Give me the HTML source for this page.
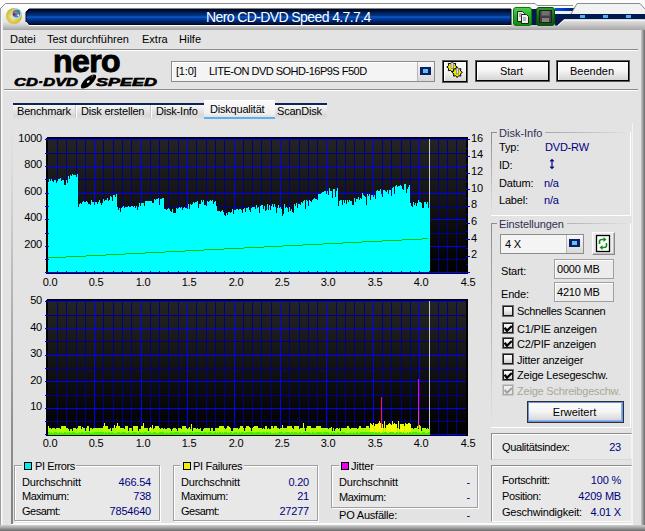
<!DOCTYPE html>
<html><head><meta charset="utf-8">
<style>
*{margin:0;padding:0;box-sizing:border-box}
html,body{width:645px;height:531px;overflow:hidden;background:#e3e3e3}
body{position:relative;font-family:"Liberation Sans",sans-serif;font-size:11px;color:#000}
.t{position:absolute;line-height:13px;white-space:nowrap;letter-spacing:-0.2px}
.m{letter-spacing:0}
.r{text-align:right}
.c{text-align:center}
.nv{color:#00007f}
.abs{position:absolute}
.grp{position:absolute;border:1px solid #a0a0a0;box-shadow:inset 1px 1px 0 #fff,1px 1px 0 #fff}
.fg{position:absolute;border-right:1px solid #fff;border-bottom:1px solid #fff}
.fg:before{content:'';position:absolute;left:0;top:0;right:0;height:1px;background:linear-gradient(90deg,#8c8c8c,#b8b8b8 60%,#e3e3e3)}
.fg:after{content:'';position:absolute;left:0;top:0;bottom:0;width:1px;background:linear-gradient(#8c8c8c,#c0c0c0 60%,#e3e3e3)}
.btn{position:absolute;border:1px solid #5a5a5a;background:linear-gradient(#fcfcfc,#f6f6f6 45%,#dcdcdc 85%,#d0d0d0);box-shadow:inset 0 0 0 1px #000,inset 2px 2px 0 #fff}
.cb{position:absolute;width:12px;height:12px;border:1px solid #707070;background:linear-gradient(#fcfcfc,#f0f0f0 40%,#c4c4c4);box-shadow:inset 0 0 0 1px #1a1a1a}
.tab{position:absolute;top:103px;height:16px;border-top:2px solid #0c2458;background:linear-gradient(#f8f8f8,#e4e4e4 45%,#d8d8d8 75%,#e0e0e0)}
</style></head><body>
<!-- window frame -->
<div class="abs" style="left:0;top:0;width:645px;height:30px;background:linear-gradient(#fdfdfd 0,#fdfdfd 8px,#f0f0f0 14px,#e4e4e4 22px,#c8c8c8 26px,#a4a4a4 30px)"></div>

<div class="abs" style="left:0;top:0;width:645px;height:3px;background:#fdfdfd"></div>
<div class="abs" style="left:0;top:8px;width:3px;height:523px;background:linear-gradient(90deg,#6e6e6e,#fafafa 50%,#e8e8e8)"></div>
<div class="abs" style="left:641px;top:9px;width:4px;height:522px;background:linear-gradient(90deg,#c8c8c8,#6a6a6a)"></div>
<div class="abs" style="left:0;top:525px;width:645px;height:6px;background:linear-gradient(#d0d0d0,#a0a0a0 50%,#686868)"></div>
<!-- title bar -->
<svg class="abs" style="left:0;top:0" width="645" height="30">
 <defs>
  <linearGradient id="tb" x1="0" y1="0" x2="0" y2="1">
   <stop offset="0" stop-color="#000010"/><stop offset="0.1" stop-color="#000c30"/><stop offset="0.25" stop-color="#002260"/><stop offset="0.42" stop-color="#003688"/><stop offset="0.5" stop-color="#0c5cd8"/><stop offset="0.58" stop-color="#0640a0"/><stop offset="0.72" stop-color="#002a78"/><stop offset="0.9" stop-color="#001444"/><stop offset="1" stop-color="#000010"/>
  </linearGradient>
  <radialGradient id="gold" cx="0.45" cy="0.55" r="0.6"><stop offset="0" stop-color="#f8f0c0"/><stop offset="0.45" stop-color="#e0d060"/><stop offset="0.9" stop-color="#c8b820"/><stop offset="1" stop-color="#a89810"/></radialGradient>
 </defs>
 <path d="M0.5 8.5 L5.5 3.5 L535 3.5 L537 5.5 L573 5.5" stroke="#8a8a8a" fill="none"/>
 <path d="M26 12 L29 9 L511 9 L511 25 L29 25 L26 22 Z" fill="url(#tb)" stroke="#000818" stroke-width="1"/>
 <path d="M26 22 L29 25.5 L511 25.5" stroke="#ffffff" fill="none"/>
 <circle cx="14" cy="16" r="8" fill="url(#gold)"/>
 <circle cx="16.5" cy="13.5" r="4.6" fill="#1c8ce0" stroke="#d8d8d8" stroke-width="1.3"/>
 <path d="M14.5 11 L18.5 15" stroke="#f06030" stroke-width="1.6"/>
 <circle cx="14" cy="14.5" r="1.2" fill="#c01010"/><circle cx="18.5" cy="10.8" r="1" fill="#20a040"/><circle cx="18.3" cy="15.5" r="0.9" fill="#fff"/>
 <!-- green buttons -->
 <defs><linearGradient id="gb1" x1="0" y1="0" x2="0" y2="1"><stop offset="0" stop-color="#50d050"/><stop offset="0.5" stop-color="#20b020"/><stop offset="1" stop-color="#108810"/></linearGradient>
 <linearGradient id="gb2" x1="0" y1="0" x2="0" y2="1"><stop offset="0" stop-color="#30a030"/><stop offset="0.5" stop-color="#107010"/><stop offset="1" stop-color="#0a500a"/></linearGradient>
 <linearGradient id="nv" x1="0" y1="0" x2="1" y2="0"><stop offset="0" stop-color="#0850e8"/><stop offset="0.6" stop-color="#0030a0"/><stop offset="1" stop-color="#001050"/></linearGradient></defs>
 <rect x="531" y="9" width="6" height="16" fill="#001a50"/>
 <path d="M555 8 L577 8 L574.5 11 L555 11 Z" fill="url(#nv)"/>
 <path d="M555 11 L645 11 L645 14 L555 14 Z" fill="#f0f0f0"/>
 <path d="M645 14 L645 19.5 L564 19.5 L557.5 25.5 L555 25.5 L555 14 Z" fill="#001a50"/>
 <rect x="513.5" y="7.5" width="18" height="18" rx="2.5" fill="url(#gb1)" stroke="#0a7a0a"/>
 <path d="M517.5 11.5 h5 l2 2 v8 h-7 z" fill="#e8e8e8" stroke="#202020" stroke-width="1"/>
 <path d="M521.5 14.5 h5 l2 2 v7 h-7 z" fill="#f0f0f0" stroke="#202020" stroke-width="1"/>
 <path d="M519 14 h3 M519 16 h3 M523 18 h3 M523 20 h3" stroke="#606060" stroke-width="0.8"/>
 <rect x="536.5" y="7.5" width="18" height="18" rx="2.5" fill="url(#gb2)" stroke="#0a500a"/>
 <rect x="539.5" y="10.5" width="12" height="12" fill="#404040" stroke="#202020"/>
 <rect x="541.5" y="11" width="8" height="4.5" fill="#707070"/>
 <rect x="542" y="18" width="7" height="4" fill="#808080"/>
 <path d="M577 3.5 L640 3.5 L645 9 L645 14 L571 14 Z" fill="#f2f2f2"/>
 <path d="M571 14 L577 3.5 L640 3.5 L645 9" stroke="#8a8a8a" fill="none"/>
 <rect x="580" y="15" width="5" height="3" fill="#50b0f0"/>
 <rect x="603" y="15" width="5" height="3" fill="#50b0f0"/>
 <rect x="626" y="15" width="5" height="3" fill="#50b0f0"/>
 <path d="M564 19.5 L645 19.5 L645 30 L555 30 L555 26 L557.5 26 Z" fill="url(#sl)"/><defs><linearGradient id="sl" x1="0" y1="0" x2="0" y2="1"><stop offset="0" stop-color="#e8e8e8"/><stop offset="1" stop-color="#a8a8a8"/></linearGradient></defs>
 <path d="M557.5 26 L564 20 L645 20" stroke="#ffffff" stroke-width="1" fill="none"/>
</svg>
<div class="t" style="left:206px;top:9px;font-size:14px;line-height:17px;color:#fff;letter-spacing:-0.6px">Nero CD-DVD Speed 4.7.7.4</div>
<!-- menu -->
<div class="t m" style="left:10px;top:33px">Datei</div>
<div class="t m" style="left:47px;top:33px">Test durchführen</div>
<div class="t m" style="left:142px;top:33px">Extra</div>
<div class="t m" style="left:179px;top:33px">Hilfe</div>
<div class="abs" style="left:4px;top:49px;width:634px;height:1px;background:#8c8c8c"></div>
<div class="abs" style="left:4px;top:50px;width:634px;height:1px;background:#fff"></div>
<!-- logo -->
<div class="t" style="left:53px;top:44px;font-size:32px;line-height:34px;font-weight:bold;letter-spacing:-0.6px;-webkit-text-stroke:1px #000">nero</div>
<svg class="abs" style="left:0;top:70px" width="170" height="20">
 <text x="14" y="16" font-family="Liberation Sans" font-weight="bold" font-style="italic" font-size="11" stroke="#000" stroke-width="0.6" textLength="64" lengthAdjust="spacingAndGlyphs">CD·DVD</text>
 <ellipse cx="88.5" cy="11.5" rx="9.6" ry="3.9" transform="rotate(-42 88.5 11.5)" fill="#000"/><ellipse cx="88.3" cy="11.6" rx="1.6" ry="1" transform="rotate(-42 88.3 11.6)" fill="#fff"/><path d="M91.5 7 L93.5 5.3" stroke="#aaa" stroke-width="0.8"/>
 <text x="96" y="16" font-family="Liberation Sans" font-weight="bold" font-style="italic" font-size="11" stroke="#000" stroke-width="0.6" textLength="61" lengthAdjust="spacingAndGlyphs">SPEED</text>
</svg>
<!-- drive combo -->
<div class="abs" style="left:171px;top:61px;width:264px;height:21px;border:1px solid #8c8c8c;background:#f4f4f4;box-shadow:inset 1px 1px 0 #fff"></div>
<div class="abs" style="left:417px;top:62px;width:17px;height:19px;background:linear-gradient(#f8f8f8,#d8d8d8);border-left:1px solid #b8b8b8"></div>
<div class="abs" style="left:420px;top:67px;width:11px;height:8px;background:#0a2060;padding:2px 3px"><div style="width:5px;height:4px;background:#60c0f8"></div></div>
<div class="t" style="left:176px;top:65px">[1:0]</div>
<div class="t" style="left:209px;top:65px;letter-spacing:-0.5px">LITE-ON DVD SOHD-16P9S F50D</div>
<div class="btn" style="left:442px;top:60px;width:26px;height:23px"></div>
<svg class="abs" style="left:442px;top:60px" width="26" height="23">
 <polygon points="15.2,7.0 13.3,8.4 13.7,10.7 11.4,10.3 10.0,12.2 8.6,10.3 6.3,10.7 6.7,8.4 4.8,7.0 6.7,5.6 6.3,3.3 8.6,3.7 10.0,1.8 11.4,3.7 13.7,3.3 13.3,5.6" fill="#f4f000" stroke="#000" stroke-width="1"/>
 <polygon points="20.4,12.4 18.5,13.8 18.9,16.1 16.6,15.7 15.2,17.6 13.8,15.7 11.5,16.1 11.9,13.8 10.0,12.4 11.9,11.0 11.5,8.7 13.8,9.1 15.2,7.2 16.6,9.1 18.9,8.7 18.5,11.0" fill="#f4f000" stroke="#000" stroke-width="1"/>
 <rect x="9" y="2.5" width="2.5" height="6" fill="#d8d8e0" stroke="#606070" stroke-width="0.6"/>
 <rect x="14.2" y="8" width="2.5" height="6" fill="#d8d8e0" stroke="#606070" stroke-width="0.6"/>
</svg>
<div class="btn" style="left:475px;top:60px;width:75px;height:22px"></div>
<div class="t c m" style="left:474px;top:65px;width:75px">Start</div>
<div class="btn" style="left:556px;top:60px;width:74px;height:22px"></div>
<div class="t c m" style="left:555px;top:65px;width:74px">Beenden</div>
<div class="abs" style="left:4px;top:89px;width:634px;height:1px;background:#8c8c8c"></div>
<div class="abs" style="left:4px;top:90px;width:634px;height:1px;background:#fff"></div>
<!-- tabs -->
<div class="tab" style="left:13px;width:64px"></div>
<div class="tab" style="left:77px;width:75px"></div>
<div class="tab" style="left:152px;width:52px"></div>
<div class="abs" style="left:75px;top:105px;width:1px;height:13px;background:#c8c8c8"></div><div class="abs" style="left:76px;top:105px;width:1px;height:13px;background:#fff"></div>
<div class="abs" style="left:150px;top:105px;width:1px;height:13px;background:#c8c8c8"></div><div class="abs" style="left:151px;top:105px;width:1px;height:13px;background:#fff"></div>
<div class="abs" style="left:204px;top:100px;width:71px;height:19px;background:linear-gradient(#fafafa,#f0f0f0 70%,#d8d8d8);border-top:1px solid #fff"></div>
<div class="abs" style="left:204px;top:117px;width:71px;height:2px;background:#5ab0f0"></div>
<div class="tab" style="left:275px;width:52px"></div>
<div class="t" style="left:17px;top:105px">Benchmark</div>
<div class="t" style="left:81px;top:105px">Disk erstellen</div>
<div class="t" style="left:156px;top:105px">Disk-Info</div>
<div class="t" style="left:210px;top:103px">Diskqualität</div>
<div class="t" style="left:277px;top:105px">ScanDisk</div>
<!-- tab page left border -->
<div class="abs" style="left:632px;top:123px;width:1px;height:401px;background:#f4f4f4"></div>
<div class="abs" style="left:11px;top:523px;width:622px;height:2px;background:#fafafa"></div>
<div class="abs" style="left:11px;top:120px;width:2px;height:404px;background:linear-gradient(#e3e3e3,#dcdcdc 12%,#b8b8b8 40%,#909090 75%,#808080)"></div>
<svg width="645" height="531" style="position:absolute;left:0;top:0" shape-rendering="crispEdges"><defs><linearGradient id="bg" x1="0" y1="0" x2="0" y2="1"><stop offset="0" stop-color="#242424"/><stop offset="1" stop-color="#000"/></linearGradient></defs><path d="M46 138.5 L48 137 L467.5 137 L467.5 273.5 L46 273.5 Z" fill="#000"/><rect x="48" y="139" width="418" height="133" fill="url(#bg)"/><rect x="57" y="139" width="1" height="133" fill="#000088"/><rect x="66" y="139" width="1" height="133" fill="#000088"/><rect x="76" y="139" width="1" height="133" fill="#000088"/><rect x="85" y="139" width="1" height="133" fill="#000088"/><rect x="94" y="139" width="1" height="133" fill="#0000ff"/><rect x="103" y="139" width="1" height="133" fill="#000088"/><rect x="113" y="139" width="1" height="133" fill="#000088"/><rect x="122" y="139" width="1" height="133" fill="#000088"/><rect x="131" y="139" width="1" height="133" fill="#000088"/><rect x="141" y="139" width="1" height="133" fill="#0000ff"/><rect x="150" y="139" width="1" height="133" fill="#000088"/><rect x="159" y="139" width="1" height="133" fill="#000088"/><rect x="168" y="139" width="1" height="133" fill="#000088"/><rect x="178" y="139" width="1" height="133" fill="#000088"/><rect x="187" y="139" width="1" height="133" fill="#0000ff"/><rect x="196" y="139" width="1" height="133" fill="#000088"/><rect x="206" y="139" width="1" height="133" fill="#000088"/><rect x="215" y="139" width="1" height="133" fill="#000088"/><rect x="224" y="139" width="1" height="133" fill="#000088"/><rect x="234" y="139" width="1" height="133" fill="#0000ff"/><rect x="243" y="139" width="1" height="133" fill="#000088"/><rect x="252" y="139" width="1" height="133" fill="#000088"/><rect x="261" y="139" width="1" height="133" fill="#000088"/><rect x="271" y="139" width="1" height="133" fill="#000088"/><rect x="280" y="139" width="1" height="133" fill="#0000ff"/><rect x="289" y="139" width="1" height="133" fill="#000088"/><rect x="299" y="139" width="1" height="133" fill="#000088"/><rect x="308" y="139" width="1" height="133" fill="#000088"/><rect x="317" y="139" width="1" height="133" fill="#000088"/><rect x="326" y="139" width="1" height="133" fill="#0000ff"/><rect x="336" y="139" width="1" height="133" fill="#000088"/><rect x="345" y="139" width="1" height="133" fill="#000088"/><rect x="354" y="139" width="1" height="133" fill="#000088"/><rect x="364" y="139" width="1" height="133" fill="#000088"/><rect x="373" y="139" width="1" height="133" fill="#0000ff"/><rect x="382" y="139" width="1" height="133" fill="#000088"/><rect x="391" y="139" width="1" height="133" fill="#000088"/><rect x="401" y="139" width="1" height="133" fill="#000088"/><rect x="410" y="139" width="1" height="133" fill="#000088"/><rect x="419" y="139" width="1" height="133" fill="#0000ff"/><rect x="429" y="139" width="1" height="133" fill="#000088"/><rect x="438" y="139" width="1" height="133" fill="#000088"/><rect x="447" y="139" width="1" height="133" fill="#000088"/><rect x="456" y="139" width="1" height="133" fill="#000088"/><rect x="48" y="139" width="418" height="1" fill="#0000ff"/><rect x="48" y="153" width="418" height="1" fill="#000088"/><rect x="48" y="166" width="418" height="1" fill="#0000ff"/><rect x="48" y="179" width="418" height="1" fill="#000088"/><rect x="48" y="193" width="418" height="1" fill="#0000ff"/><rect x="48" y="206" width="418" height="1" fill="#000088"/><rect x="48" y="219" width="418" height="1" fill="#0000ff"/><rect x="48" y="233" width="418" height="1" fill="#000088"/><rect x="48" y="246" width="418" height="1" fill="#0000ff"/><rect x="48" y="259" width="418" height="1" fill="#000088"/><rect x="48" y="272" width="418" height="1" fill="#0000ff"/><rect x="45" y="139" width="3" height="1" fill="#0000ff"/><rect x="45" y="153" width="3" height="1" fill="#0000ff"/><rect x="45" y="166" width="3" height="1" fill="#0000ff"/><rect x="45" y="179" width="3" height="1" fill="#0000ff"/><rect x="45" y="193" width="3" height="1" fill="#0000ff"/><rect x="45" y="206" width="3" height="1" fill="#0000ff"/><rect x="45" y="219" width="3" height="1" fill="#0000ff"/><rect x="45" y="233" width="3" height="1" fill="#0000ff"/><rect x="45" y="246" width="3" height="1" fill="#0000ff"/><rect x="45" y="259" width="3" height="1" fill="#0000ff"/><rect x="45" y="272" width="3" height="1" fill="#0000ff"/><path d="M46 300.5 L48 299 L467.5 299 L467.5 435.5 L46 435.5 Z" fill="#000"/><rect x="48" y="301" width="418" height="133" fill="url(#bg)"/><rect x="57" y="301" width="1" height="133" fill="#000088"/><rect x="66" y="301" width="1" height="133" fill="#000088"/><rect x="76" y="301" width="1" height="133" fill="#000088"/><rect x="85" y="301" width="1" height="133" fill="#000088"/><rect x="94" y="301" width="1" height="133" fill="#0000ff"/><rect x="103" y="301" width="1" height="133" fill="#000088"/><rect x="113" y="301" width="1" height="133" fill="#000088"/><rect x="122" y="301" width="1" height="133" fill="#000088"/><rect x="131" y="301" width="1" height="133" fill="#000088"/><rect x="141" y="301" width="1" height="133" fill="#0000ff"/><rect x="150" y="301" width="1" height="133" fill="#000088"/><rect x="159" y="301" width="1" height="133" fill="#000088"/><rect x="168" y="301" width="1" height="133" fill="#000088"/><rect x="178" y="301" width="1" height="133" fill="#000088"/><rect x="187" y="301" width="1" height="133" fill="#0000ff"/><rect x="196" y="301" width="1" height="133" fill="#000088"/><rect x="206" y="301" width="1" height="133" fill="#000088"/><rect x="215" y="301" width="1" height="133" fill="#000088"/><rect x="224" y="301" width="1" height="133" fill="#000088"/><rect x="234" y="301" width="1" height="133" fill="#0000ff"/><rect x="243" y="301" width="1" height="133" fill="#000088"/><rect x="252" y="301" width="1" height="133" fill="#000088"/><rect x="261" y="301" width="1" height="133" fill="#000088"/><rect x="271" y="301" width="1" height="133" fill="#000088"/><rect x="280" y="301" width="1" height="133" fill="#0000ff"/><rect x="289" y="301" width="1" height="133" fill="#000088"/><rect x="299" y="301" width="1" height="133" fill="#000088"/><rect x="308" y="301" width="1" height="133" fill="#000088"/><rect x="317" y="301" width="1" height="133" fill="#000088"/><rect x="326" y="301" width="1" height="133" fill="#0000ff"/><rect x="336" y="301" width="1" height="133" fill="#000088"/><rect x="345" y="301" width="1" height="133" fill="#000088"/><rect x="354" y="301" width="1" height="133" fill="#000088"/><rect x="364" y="301" width="1" height="133" fill="#000088"/><rect x="373" y="301" width="1" height="133" fill="#0000ff"/><rect x="382" y="301" width="1" height="133" fill="#000088"/><rect x="391" y="301" width="1" height="133" fill="#000088"/><rect x="401" y="301" width="1" height="133" fill="#000088"/><rect x="410" y="301" width="1" height="133" fill="#000088"/><rect x="419" y="301" width="1" height="133" fill="#0000ff"/><rect x="429" y="301" width="1" height="133" fill="#000088"/><rect x="438" y="301" width="1" height="133" fill="#000088"/><rect x="447" y="301" width="1" height="133" fill="#000088"/><rect x="456" y="301" width="1" height="133" fill="#000088"/><rect x="48" y="301" width="418" height="1" fill="#0000ff"/><rect x="48" y="315" width="418" height="1" fill="#000088"/><rect x="48" y="328" width="418" height="1" fill="#0000ff"/><rect x="48" y="341" width="418" height="1" fill="#000088"/><rect x="48" y="355" width="418" height="1" fill="#0000ff"/><rect x="48" y="368" width="418" height="1" fill="#000088"/><rect x="48" y="381" width="418" height="1" fill="#0000ff"/><rect x="48" y="395" width="418" height="1" fill="#000088"/><rect x="48" y="408" width="418" height="1" fill="#0000ff"/><rect x="48" y="421" width="418" height="1" fill="#000088"/><rect x="48" y="434" width="418" height="1" fill="#0000ff"/><rect x="45" y="301" width="3" height="1" fill="#0000ff"/><rect x="45" y="315" width="3" height="1" fill="#0000ff"/><rect x="45" y="328" width="3" height="1" fill="#0000ff"/><rect x="45" y="341" width="3" height="1" fill="#0000ff"/><rect x="45" y="355" width="3" height="1" fill="#0000ff"/><rect x="45" y="368" width="3" height="1" fill="#0000ff"/><rect x="45" y="381" width="3" height="1" fill="#0000ff"/><rect x="45" y="395" width="3" height="1" fill="#0000ff"/><rect x="45" y="408" width="3" height="1" fill="#0000ff"/><rect x="45" y="421" width="3" height="1" fill="#0000ff"/><rect x="45" y="434" width="3" height="1" fill="#0000ff"/><rect x="466" y="139" width="4" height="1" fill="#0000ff"/><rect x="466" y="148" width="2" height="1" fill="#0000ff"/><rect x="466" y="156" width="4" height="1" fill="#0000ff"/><rect x="466" y="164" width="2" height="1" fill="#0000ff"/><rect x="466" y="173" width="4" height="1" fill="#0000ff"/><rect x="466" y="181" width="2" height="1" fill="#0000ff"/><rect x="466" y="189" width="4" height="1" fill="#0000ff"/><rect x="466" y="198" width="2" height="1" fill="#0000ff"/><rect x="466" y="206" width="4" height="1" fill="#0000ff"/><rect x="466" y="214" width="2" height="1" fill="#0000ff"/><rect x="466" y="223" width="4" height="1" fill="#0000ff"/><rect x="466" y="231" width="2" height="1" fill="#0000ff"/><rect x="466" y="239" width="4" height="1" fill="#0000ff"/><rect x="466" y="248" width="2" height="1" fill="#0000ff"/><rect x="466" y="256" width="4" height="1" fill="#0000ff"/><rect x="466" y="264" width="2" height="1" fill="#0000ff"/><rect x="466" y="272" width="4" height="1" fill="#0000ff"/><rect x="429" y="139" width="1" height="133" fill="#c8c8c8"/><rect x="429" y="301" width="1" height="133" fill="#c8c8c8"/><path d="M48 272 L48 182 L49 182 L49 179 L50 179 L50 181 L51 181 L51 179 L52 179 L52 181 L53 181 L53 182 L54 182 L54 180 L55 180 L55 180 L56 180 L56 183 L57 183 L57 181 L58 181 L58 179 L59 179 L59 179 L60 179 L60 178 L61 178 L61 181 L62 181 L62 180 L63 180 L63 180 L64 180 L64 185 L65 185 L65 185 L66 185 L66 180 L67 180 L67 183 L68 183 L68 176 L69 176 L69 179 L70 179 L70 175 L71 175 L71 176 L72 176 L72 174 L73 174 L73 175 L74 175 L74 175 L75 175 L75 175 L76 175 L76 177 L77 177 L77 174 L78 174 L78 207 L79 207 L79 204 L80 204 L80 203 L81 203 L81 204 L82 204 L82 202 L83 202 L83 201 L84 201 L84 202 L85 202 L85 202 L86 202 L86 201 L87 201 L87 202 L88 202 L88 204 L89 204 L89 204 L90 204 L90 205 L91 205 L91 200 L92 200 L92 202 L93 202 L93 202 L94 202 L94 205 L95 205 L95 202 L96 202 L96 202 L97 202 L97 204 L98 204 L98 202 L99 202 L99 200 L100 200 L100 203 L101 203 L101 205 L102 205 L102 203 L103 203 L103 199 L104 199 L104 201 L105 201 L105 200 L106 200 L106 200 L107 200 L107 198 L108 198 L108 201 L109 201 L109 200 L110 200 L110 196 L111 196 L111 197 L112 197 L112 201 L113 201 L113 195 L114 195 L114 195 L115 195 L115 197 L116 197 L116 194 L117 194 L117 207 L118 207 L118 210 L119 210 L119 208 L120 208 L120 212 L121 212 L121 208 L122 208 L122 207 L123 207 L123 206 L124 206 L124 208 L125 208 L125 207 L126 207 L126 207 L127 207 L127 207 L128 207 L128 206 L129 206 L129 207 L130 207 L130 207 L131 207 L131 206 L132 206 L132 206 L133 206 L133 207 L134 207 L134 206 L135 206 L135 208 L136 208 L136 206 L137 206 L137 210 L138 210 L138 207 L139 207 L139 203 L140 203 L140 206 L141 206 L141 203 L142 203 L142 203 L143 203 L143 203 L144 203 L144 206 L145 206 L145 201 L146 201 L146 201 L147 201 L147 201 L148 201 L148 201 L149 201 L149 201 L150 201 L150 201 L151 201 L151 201 L152 201 L152 203 L153 203 L153 203 L154 203 L154 199 L155 199 L155 200 L156 200 L156 199 L157 199 L157 199 L158 199 L158 198 L159 198 L159 205 L160 205 L160 199 L161 199 L161 199 L162 199 L162 198 L163 198 L163 198 L164 198 L164 209 L165 209 L165 209 L166 209 L166 210 L167 210 L167 209 L168 209 L168 208 L169 208 L169 209 L170 209 L170 211 L171 211 L171 212 L172 212 L172 209 L173 209 L173 213 L174 213 L174 213 L175 213 L175 213 L176 213 L176 208 L177 208 L177 209 L178 209 L178 208 L179 208 L179 207 L180 207 L180 208 L181 208 L181 207 L182 207 L182 210 L183 210 L183 208 L184 208 L184 207 L185 207 L185 208 L186 208 L186 208 L187 208 L187 209 L188 209 L188 204 L189 204 L189 209 L190 209 L190 204 L191 204 L191 205 L192 205 L192 204 L193 204 L193 202 L194 202 L194 203 L195 203 L195 202 L196 202 L196 202 L197 202 L197 201 L198 201 L198 208 L199 208 L199 204 L200 204 L200 204 L201 204 L201 200 L202 200 L202 202 L203 202 L203 200 L204 200 L204 205 L205 205 L205 205 L206 205 L206 206 L207 206 L207 201 L208 201 L208 202 L209 202 L209 201 L210 201 L210 200 L211 200 L211 201 L212 201 L212 200 L213 200 L213 204 L214 204 L214 202 L215 202 L215 201 L216 201 L216 206 L217 206 L217 211 L218 211 L218 211 L219 211 L219 211 L220 211 L220 212 L221 212 L221 211 L222 211 L222 210 L223 210 L223 212 L224 212 L224 215 L225 215 L225 216 L226 216 L226 213 L227 213 L227 215 L228 215 L228 212 L229 212 L229 212 L230 212 L230 213 L231 213 L231 212 L232 212 L232 209 L233 209 L233 214 L234 214 L234 210 L235 210 L235 210 L236 210 L236 209 L237 209 L237 209 L238 209 L238 210 L239 210 L239 209 L240 209 L240 209 L241 209 L241 210 L242 210 L242 213 L243 213 L243 209 L244 209 L244 208 L245 208 L245 212 L246 212 L246 208 L247 208 L247 208 L248 208 L248 207 L249 207 L249 210 L250 210 L250 212 L251 212 L251 208 L252 208 L252 207 L253 207 L253 207 L254 207 L254 207 L255 207 L255 209 L256 209 L256 205 L257 205 L257 208 L258 208 L258 207 L259 207 L259 213 L260 213 L260 206 L261 206 L261 205 L262 205 L262 205 L263 205 L263 209 L264 209 L264 206 L265 206 L265 211 L266 211 L266 210 L267 210 L267 204 L268 204 L268 210 L269 210 L269 205 L270 205 L270 210 L271 210 L271 206 L272 206 L272 204 L273 204 L273 207 L274 207 L274 204 L275 204 L275 207 L276 207 L276 213 L277 213 L277 208 L278 208 L278 205 L279 205 L279 208 L280 208 L280 207 L281 207 L281 209 L282 209 L282 216 L283 216 L283 214 L284 214 L284 204 L285 204 L285 208 L286 208 L286 207 L287 207 L287 208 L288 208 L288 212 L289 212 L289 207 L290 207 L290 211 L291 211 L291 209 L292 209 L292 212 L293 212 L293 213 L294 213 L294 204 L295 204 L295 206 L296 206 L296 203 L297 203 L297 208 L298 208 L298 204 L299 204 L299 204 L300 204 L300 205 L301 205 L301 202 L302 202 L302 203 L303 203 L303 201 L304 201 L304 200 L305 200 L305 209 L306 209 L306 200 L307 200 L307 201 L308 201 L308 206 L309 206 L309 200 L310 200 L310 201 L311 201 L311 202 L312 202 L312 200 L313 200 L313 199 L314 199 L314 198 L315 198 L315 199 L316 199 L316 199 L317 199 L317 200 L318 200 L318 194 L319 194 L319 194 L320 194 L320 194 L321 194 L321 193 L322 193 L322 192 L323 192 L323 192 L324 192 L324 191 L325 191 L325 191 L326 191 L326 194 L327 194 L327 191 L328 191 L328 195 L329 195 L329 188 L330 188 L330 191 L331 191 L331 191 L332 191 L332 198 L333 198 L333 189 L334 189 L334 189 L335 189 L335 197 L336 197 L336 191 L337 191 L337 188 L338 188 L338 206 L339 206 L339 201 L340 201 L340 200 L341 200 L341 200 L342 200 L342 205 L343 205 L343 200 L344 200 L344 203 L345 203 L345 200 L346 200 L346 204 L347 204 L347 200 L348 200 L348 202 L349 202 L349 200 L350 200 L350 201 L351 201 L351 201 L352 201 L352 205 L353 205 L353 205 L354 205 L354 198 L355 198 L355 202 L356 202 L356 199 L357 199 L357 199 L358 199 L358 197 L359 197 L359 200 L360 200 L360 198 L361 198 L361 199 L362 199 L362 193 L363 193 L363 195 L364 195 L364 196 L365 196 L365 197 L366 197 L366 205 L367 205 L367 194 L368 194 L368 196 L369 196 L369 194 L370 194 L370 200 L371 200 L371 195 L372 195 L372 195 L373 195 L373 197 L374 197 L374 195 L375 195 L375 199 L376 199 L376 191 L377 191 L377 190 L378 190 L378 191 L379 191 L379 191 L380 191 L380 189 L381 189 L381 194 L382 194 L382 197 L383 197 L383 190 L384 190 L384 190 L385 190 L385 191 L386 191 L386 192 L387 192 L387 190 L388 190 L388 194 L389 194 L389 190 L390 190 L390 190 L391 190 L391 196 L392 196 L392 188 L393 188 L393 187 L394 187 L394 194 L395 194 L395 186 L396 186 L396 185 L397 185 L397 187 L398 187 L398 186 L399 186 L399 186 L400 186 L400 185 L401 185 L401 186 L402 186 L402 189 L403 189 L403 190 L404 190 L404 184 L405 184 L405 184 L406 184 L406 193 L407 193 L407 189 L408 189 L408 187 L409 187 L409 185 L410 185 L410 203 L411 203 L411 206 L412 206 L412 207 L413 207 L413 202 L414 202 L414 205 L415 205 L415 203 L416 203 L416 206 L417 206 L417 203 L418 203 L418 200 L419 200 L419 202 L420 202 L420 202 L421 202 L421 203 L422 203 L422 208 L423 208 L423 208 L424 208 L424 202 L425 202 L425 202 L426 202 L426 204 L427 204 L427 202 L428 202 L428 208 L429 208 L429 202 L430 202 L430 272 Z" fill="#00ffff"/><rect x="57" y="271" width="1" height="1" fill="#0000ff"/><rect x="66" y="271" width="1" height="1" fill="#0000ff"/><rect x="76" y="271" width="1" height="1" fill="#0000ff"/><rect x="85" y="271" width="1" height="1" fill="#0000ff"/><rect x="94" y="271" width="1" height="1" fill="#0000ff"/><rect x="103" y="271" width="1" height="1" fill="#0000ff"/><rect x="113" y="271" width="1" height="1" fill="#0000ff"/><rect x="122" y="271" width="1" height="1" fill="#0000ff"/><rect x="131" y="271" width="1" height="1" fill="#0000ff"/><rect x="141" y="271" width="1" height="1" fill="#0000ff"/><rect x="150" y="271" width="1" height="1" fill="#0000ff"/><rect x="159" y="271" width="1" height="1" fill="#0000ff"/><rect x="168" y="271" width="1" height="1" fill="#0000ff"/><rect x="178" y="271" width="1" height="1" fill="#0000ff"/><rect x="187" y="271" width="1" height="1" fill="#0000ff"/><rect x="196" y="271" width="1" height="1" fill="#0000ff"/><rect x="206" y="271" width="1" height="1" fill="#0000ff"/><rect x="215" y="271" width="1" height="1" fill="#0000ff"/><rect x="224" y="271" width="1" height="1" fill="#0000ff"/><rect x="234" y="271" width="1" height="1" fill="#0000ff"/><rect x="243" y="271" width="1" height="1" fill="#0000ff"/><rect x="252" y="271" width="1" height="1" fill="#0000ff"/><rect x="261" y="271" width="1" height="1" fill="#0000ff"/><rect x="271" y="271" width="1" height="1" fill="#0000ff"/><rect x="280" y="271" width="1" height="1" fill="#0000ff"/><rect x="289" y="271" width="1" height="1" fill="#0000ff"/><rect x="299" y="271" width="1" height="1" fill="#0000ff"/><rect x="308" y="271" width="1" height="1" fill="#0000ff"/><rect x="317" y="271" width="1" height="1" fill="#0000ff"/><rect x="326" y="271" width="1" height="1" fill="#0000ff"/><rect x="336" y="271" width="1" height="1" fill="#0000ff"/><rect x="345" y="271" width="1" height="1" fill="#0000ff"/><rect x="354" y="271" width="1" height="1" fill="#0000ff"/><rect x="364" y="271" width="1" height="1" fill="#0000ff"/><rect x="373" y="271" width="1" height="1" fill="#0000ff"/><rect x="382" y="271" width="1" height="1" fill="#0000ff"/><rect x="391" y="271" width="1" height="1" fill="#0000ff"/><rect x="401" y="271" width="1" height="1" fill="#0000ff"/><rect x="410" y="271" width="1" height="1" fill="#0000ff"/><rect x="419" y="271" width="1" height="1" fill="#0000ff"/><rect x="429" y="271" width="1" height="1" fill="#0000ff"/><rect x="48" y="179" width="1" height="1" fill="#0000ff"/><rect x="48" y="193" width="1" height="1" fill="#0000ff"/><rect x="48" y="206" width="1" height="1" fill="#0000ff"/><rect x="48" y="219" width="1" height="1" fill="#0000ff"/><rect x="48" y="233" width="1" height="1" fill="#0000ff"/><rect x="48" y="246" width="1" height="1" fill="#0000ff"/><rect x="48" y="259" width="1" height="1" fill="#0000ff"/><rect x="48" y="257" width="1" height="1" fill="#00c400"/><rect x="49" y="257" width="1" height="1" fill="#00c400"/><rect x="50" y="257" width="1" height="1" fill="#00c400"/><rect x="51" y="257" width="1" height="1" fill="#00c400"/><rect x="52" y="257" width="1" height="1" fill="#00c400"/><rect x="53" y="257" width="1" height="1" fill="#00c400"/><rect x="54" y="257" width="1" height="1" fill="#00c400"/><rect x="55" y="257" width="1" height="1" fill="#00c400"/><rect x="56" y="257" width="1" height="1" fill="#00c400"/><rect x="57" y="257" width="1" height="1" fill="#00c400"/><rect x="58" y="257" width="1" height="1" fill="#00c400"/><rect x="59" y="257" width="1" height="1" fill="#00c400"/><rect x="60" y="257" width="1" height="1" fill="#00c400"/><rect x="61" y="257" width="1" height="1" fill="#00c400"/><rect x="62" y="257" width="1" height="1" fill="#00c400"/><rect x="63" y="257" width="1" height="1" fill="#00c400"/><rect x="64" y="257" width="1" height="1" fill="#00c400"/><rect x="65" y="257" width="1" height="1" fill="#00c400"/><rect x="66" y="256" width="1" height="1" fill="#00c400"/><rect x="67" y="256" width="1" height="1" fill="#00c400"/><rect x="68" y="256" width="1" height="1" fill="#00c400"/><rect x="69" y="256" width="1" height="1" fill="#00c400"/><rect x="70" y="256" width="1" height="1" fill="#00c400"/><rect x="71" y="256" width="1" height="1" fill="#00c400"/><rect x="72" y="256" width="1" height="1" fill="#00c400"/><rect x="73" y="256" width="1" height="1" fill="#00c400"/><rect x="74" y="256" width="1" height="1" fill="#00c400"/><rect x="75" y="256" width="1" height="1" fill="#00c400"/><rect x="76" y="256" width="1" height="1" fill="#00c400"/><rect x="77" y="256" width="1" height="1" fill="#00c400"/><rect x="78" y="256" width="1" height="1" fill="#00c400"/><rect x="79" y="256" width="1" height="1" fill="#00c400"/><rect x="80" y="256" width="1" height="1" fill="#00c400"/><rect x="81" y="256" width="1" height="1" fill="#00c400"/><rect x="82" y="256" width="1" height="1" fill="#00c400"/><rect x="83" y="256" width="1" height="1" fill="#00c400"/><rect x="84" y="256" width="1" height="1" fill="#00c400"/><rect x="85" y="256" width="1" height="1" fill="#00c400"/><rect x="86" y="255" width="1" height="1" fill="#00c400"/><rect x="87" y="255" width="1" height="1" fill="#00c400"/><rect x="88" y="255" width="1" height="1" fill="#00c400"/><rect x="89" y="255" width="1" height="1" fill="#00c400"/><rect x="90" y="255" width="1" height="1" fill="#00c400"/><rect x="91" y="255" width="1" height="1" fill="#00c400"/><rect x="92" y="255" width="1" height="1" fill="#00c400"/><rect x="93" y="255" width="1" height="1" fill="#00c400"/><rect x="94" y="255" width="1" height="1" fill="#00c400"/><rect x="95" y="255" width="1" height="1" fill="#00c400"/><rect x="96" y="255" width="1" height="1" fill="#00c400"/><rect x="97" y="255" width="1" height="1" fill="#00c400"/><rect x="98" y="255" width="1" height="1" fill="#00c400"/><rect x="99" y="255" width="1" height="1" fill="#00c400"/><rect x="100" y="255" width="1" height="1" fill="#00c400"/><rect x="101" y="255" width="1" height="1" fill="#00c400"/><rect x="102" y="255" width="1" height="1" fill="#00c400"/><rect x="103" y="255" width="1" height="1" fill="#00c400"/><rect x="104" y="255" width="1" height="1" fill="#00c400"/><rect x="105" y="255" width="1" height="1" fill="#00c400"/><rect x="106" y="254" width="1" height="1" fill="#00c400"/><rect x="107" y="254" width="1" height="1" fill="#00c400"/><rect x="108" y="254" width="1" height="1" fill="#00c400"/><rect x="109" y="254" width="1" height="1" fill="#00c400"/><rect x="110" y="254" width="1" height="1" fill="#00c400"/><rect x="111" y="254" width="1" height="1" fill="#00c400"/><rect x="112" y="254" width="1" height="1" fill="#00c400"/><rect x="113" y="254" width="1" height="1" fill="#00c400"/><rect x="114" y="254" width="1" height="1" fill="#00c400"/><rect x="115" y="254" width="1" height="1" fill="#00c400"/><rect x="116" y="254" width="1" height="1" fill="#00c400"/><rect x="117" y="254" width="1" height="1" fill="#00c400"/><rect x="118" y="254" width="1" height="1" fill="#00c400"/><rect x="119" y="254" width="1" height="1" fill="#00c400"/><rect x="120" y="254" width="1" height="1" fill="#00c400"/><rect x="121" y="254" width="1" height="1" fill="#00c400"/><rect x="122" y="254" width="1" height="1" fill="#00c400"/><rect x="123" y="254" width="1" height="1" fill="#00c400"/><rect x="124" y="254" width="1" height="1" fill="#00c400"/><rect x="125" y="253" width="1" height="1" fill="#00c400"/><rect x="126" y="253" width="1" height="1" fill="#00c400"/><rect x="127" y="253" width="1" height="1" fill="#00c400"/><rect x="128" y="253" width="1" height="1" fill="#00c400"/><rect x="129" y="253" width="1" height="1" fill="#00c400"/><rect x="130" y="253" width="1" height="1" fill="#00c400"/><rect x="131" y="253" width="1" height="1" fill="#00c400"/><rect x="132" y="253" width="1" height="1" fill="#00c400"/><rect x="133" y="253" width="1" height="1" fill="#00c400"/><rect x="134" y="253" width="1" height="1" fill="#00c400"/><rect x="135" y="253" width="1" height="1" fill="#00c400"/><rect x="136" y="253" width="1" height="1" fill="#00c400"/><rect x="137" y="253" width="1" height="1" fill="#00c400"/><rect x="138" y="253" width="1" height="1" fill="#00c400"/><rect x="139" y="253" width="1" height="1" fill="#00c400"/><rect x="140" y="253" width="1" height="1" fill="#00c400"/><rect x="141" y="253" width="1" height="1" fill="#00c400"/><rect x="142" y="253" width="1" height="1" fill="#00c400"/><rect x="143" y="253" width="1" height="1" fill="#00c400"/><rect x="144" y="253" width="1" height="1" fill="#00c400"/><rect x="145" y="252" width="1" height="1" fill="#00c400"/><rect x="146" y="252" width="1" height="1" fill="#00c400"/><rect x="147" y="252" width="1" height="1" fill="#00c400"/><rect x="148" y="252" width="1" height="1" fill="#00c400"/><rect x="149" y="252" width="1" height="1" fill="#00c400"/><rect x="150" y="252" width="1" height="1" fill="#00c400"/><rect x="151" y="252" width="1" height="1" fill="#00c400"/><rect x="152" y="252" width="1" height="1" fill="#00c400"/><rect x="153" y="252" width="1" height="1" fill="#00c400"/><rect x="154" y="252" width="1" height="1" fill="#00c400"/><rect x="155" y="252" width="1" height="1" fill="#00c400"/><rect x="156" y="252" width="1" height="1" fill="#00c400"/><rect x="157" y="252" width="1" height="1" fill="#00c400"/><rect x="158" y="252" width="1" height="1" fill="#00c400"/><rect x="159" y="252" width="1" height="1" fill="#00c400"/><rect x="160" y="252" width="1" height="1" fill="#00c400"/><rect x="161" y="252" width="1" height="1" fill="#00c400"/><rect x="162" y="252" width="1" height="1" fill="#00c400"/><rect x="163" y="252" width="1" height="1" fill="#00c400"/><rect x="164" y="252" width="1" height="1" fill="#00c400"/><rect x="165" y="251" width="1" height="1" fill="#00c400"/><rect x="166" y="251" width="1" height="1" fill="#00c400"/><rect x="167" y="251" width="1" height="1" fill="#00c400"/><rect x="168" y="251" width="1" height="1" fill="#00c400"/><rect x="169" y="251" width="1" height="1" fill="#00c400"/><rect x="170" y="251" width="1" height="1" fill="#00c400"/><rect x="171" y="251" width="1" height="1" fill="#00c400"/><rect x="172" y="251" width="1" height="1" fill="#00c400"/><rect x="173" y="251" width="1" height="1" fill="#00c400"/><rect x="174" y="251" width="1" height="1" fill="#00c400"/><rect x="175" y="251" width="1" height="1" fill="#00c400"/><rect x="176" y="251" width="1" height="1" fill="#00c400"/><rect x="177" y="251" width="1" height="1" fill="#00c400"/><rect x="178" y="251" width="1" height="1" fill="#00c400"/><rect x="179" y="251" width="1" height="1" fill="#00c400"/><rect x="180" y="251" width="1" height="1" fill="#00c400"/><rect x="181" y="251" width="1" height="1" fill="#00c400"/><rect x="182" y="251" width="1" height="1" fill="#00c400"/><rect x="183" y="251" width="1" height="1" fill="#00c400"/><rect x="184" y="251" width="1" height="1" fill="#00c400"/><rect x="185" y="250" width="1" height="1" fill="#00c400"/><rect x="186" y="250" width="1" height="1" fill="#00c400"/><rect x="187" y="250" width="1" height="1" fill="#00c400"/><rect x="188" y="250" width="1" height="1" fill="#00c400"/><rect x="189" y="250" width="1" height="1" fill="#00c400"/><rect x="190" y="250" width="1" height="1" fill="#00c400"/><rect x="191" y="250" width="1" height="1" fill="#00c400"/><rect x="192" y="250" width="1" height="1" fill="#00c400"/><rect x="193" y="250" width="1" height="1" fill="#00c400"/><rect x="194" y="250" width="1" height="1" fill="#00c400"/><rect x="195" y="250" width="1" height="1" fill="#00c400"/><rect x="196" y="250" width="1" height="1" fill="#00c400"/><rect x="197" y="250" width="1" height="1" fill="#00c400"/><rect x="198" y="250" width="1" height="1" fill="#00c400"/><rect x="199" y="250" width="1" height="1" fill="#00c400"/><rect x="200" y="250" width="1" height="1" fill="#00c400"/><rect x="201" y="250" width="1" height="1" fill="#00c400"/><rect x="202" y="250" width="1" height="1" fill="#00c400"/><rect x="203" y="250" width="1" height="1" fill="#00c400"/><rect x="204" y="249" width="1" height="1" fill="#00c400"/><rect x="205" y="249" width="1" height="1" fill="#00c400"/><rect x="206" y="249" width="1" height="1" fill="#00c400"/><rect x="207" y="249" width="1" height="1" fill="#00c400"/><rect x="208" y="249" width="1" height="1" fill="#00c400"/><rect x="209" y="249" width="1" height="1" fill="#00c400"/><rect x="210" y="249" width="1" height="1" fill="#00c400"/><rect x="211" y="249" width="1" height="1" fill="#00c400"/><rect x="212" y="249" width="1" height="1" fill="#00c400"/><rect x="213" y="249" width="1" height="1" fill="#00c400"/><rect x="214" y="249" width="1" height="1" fill="#00c400"/><rect x="215" y="249" width="1" height="1" fill="#00c400"/><rect x="216" y="249" width="1" height="1" fill="#00c400"/><rect x="217" y="249" width="1" height="1" fill="#00c400"/><rect x="218" y="249" width="1" height="1" fill="#00c400"/><rect x="219" y="249" width="1" height="1" fill="#00c400"/><rect x="220" y="249" width="1" height="1" fill="#00c400"/><rect x="221" y="249" width="1" height="1" fill="#00c400"/><rect x="222" y="249" width="1" height="1" fill="#00c400"/><rect x="223" y="249" width="1" height="1" fill="#00c400"/><rect x="224" y="248" width="1" height="1" fill="#00c400"/><rect x="225" y="248" width="1" height="1" fill="#00c400"/><rect x="226" y="248" width="1" height="1" fill="#00c400"/><rect x="227" y="248" width="1" height="1" fill="#00c400"/><rect x="228" y="248" width="1" height="1" fill="#00c400"/><rect x="229" y="248" width="1" height="1" fill="#00c400"/><rect x="230" y="248" width="1" height="1" fill="#00c400"/><rect x="231" y="248" width="1" height="1" fill="#00c400"/><rect x="232" y="248" width="1" height="1" fill="#00c400"/><rect x="233" y="248" width="1" height="1" fill="#00c400"/><rect x="234" y="248" width="1" height="1" fill="#00c400"/><rect x="235" y="248" width="1" height="1" fill="#00c400"/><rect x="236" y="248" width="1" height="1" fill="#00c400"/><rect x="237" y="248" width="1" height="1" fill="#00c400"/><rect x="238" y="248" width="1" height="1" fill="#00c400"/><rect x="239" y="248" width="1" height="1" fill="#00c400"/><rect x="240" y="248" width="1" height="1" fill="#00c400"/><rect x="241" y="248" width="1" height="1" fill="#00c400"/><rect x="242" y="248" width="1" height="1" fill="#00c400"/><rect x="243" y="248" width="1" height="1" fill="#00c400"/><rect x="244" y="247" width="1" height="1" fill="#00c400"/><rect x="245" y="247" width="1" height="1" fill="#00c400"/><rect x="246" y="247" width="1" height="1" fill="#00c400"/><rect x="247" y="247" width="1" height="1" fill="#00c400"/><rect x="248" y="247" width="1" height="1" fill="#00c400"/><rect x="249" y="247" width="1" height="1" fill="#00c400"/><rect x="250" y="247" width="1" height="1" fill="#00c400"/><rect x="251" y="247" width="1" height="1" fill="#00c400"/><rect x="252" y="247" width="1" height="1" fill="#00c400"/><rect x="253" y="247" width="1" height="1" fill="#00c400"/><rect x="254" y="247" width="1" height="1" fill="#00c400"/><rect x="255" y="247" width="1" height="1" fill="#00c400"/><rect x="256" y="247" width="1" height="1" fill="#00c400"/><rect x="257" y="247" width="1" height="1" fill="#00c400"/><rect x="258" y="247" width="1" height="1" fill="#00c400"/><rect x="259" y="247" width="1" height="1" fill="#00c400"/><rect x="260" y="247" width="1" height="1" fill="#00c400"/><rect x="261" y="247" width="1" height="1" fill="#00c400"/><rect x="262" y="247" width="1" height="1" fill="#00c400"/><rect x="263" y="247" width="1" height="1" fill="#00c400"/><rect x="264" y="246" width="1" height="1" fill="#00c400"/><rect x="265" y="246" width="1" height="1" fill="#00c400"/><rect x="266" y="246" width="1" height="1" fill="#00c400"/><rect x="267" y="246" width="1" height="1" fill="#00c400"/><rect x="268" y="246" width="1" height="1" fill="#00c400"/><rect x="269" y="246" width="1" height="1" fill="#00c400"/><rect x="270" y="246" width="1" height="1" fill="#00c400"/><rect x="271" y="246" width="1" height="1" fill="#00c400"/><rect x="272" y="246" width="1" height="1" fill="#00c400"/><rect x="273" y="246" width="1" height="1" fill="#00c400"/><rect x="274" y="246" width="1" height="1" fill="#00c400"/><rect x="275" y="246" width="1" height="1" fill="#00c400"/><rect x="276" y="246" width="1" height="1" fill="#00c400"/><rect x="277" y="246" width="1" height="1" fill="#00c400"/><rect x="278" y="246" width="1" height="1" fill="#00c400"/><rect x="279" y="246" width="1" height="1" fill="#00c400"/><rect x="280" y="246" width="1" height="1" fill="#00c400"/><rect x="281" y="246" width="1" height="1" fill="#00c400"/><rect x="282" y="246" width="1" height="1" fill="#00c400"/><rect x="283" y="245" width="1" height="1" fill="#00c400"/><rect x="284" y="245" width="1" height="1" fill="#00c400"/><rect x="285" y="245" width="1" height="1" fill="#00c400"/><rect x="286" y="245" width="1" height="1" fill="#00c400"/><rect x="287" y="245" width="1" height="1" fill="#00c400"/><rect x="288" y="245" width="1" height="1" fill="#00c400"/><rect x="289" y="245" width="1" height="1" fill="#00c400"/><rect x="290" y="245" width="1" height="1" fill="#00c400"/><rect x="291" y="245" width="1" height="1" fill="#00c400"/><rect x="292" y="245" width="1" height="1" fill="#00c400"/><rect x="293" y="245" width="1" height="1" fill="#00c400"/><rect x="294" y="245" width="1" height="1" fill="#00c400"/><rect x="295" y="245" width="1" height="1" fill="#00c400"/><rect x="296" y="245" width="1" height="1" fill="#00c400"/><rect x="297" y="245" width="1" height="1" fill="#00c400"/><rect x="298" y="245" width="1" height="1" fill="#00c400"/><rect x="299" y="245" width="1" height="1" fill="#00c400"/><rect x="300" y="245" width="1" height="1" fill="#00c400"/><rect x="301" y="245" width="1" height="1" fill="#00c400"/><rect x="302" y="245" width="1" height="1" fill="#00c400"/><rect x="303" y="244" width="1" height="1" fill="#00c400"/><rect x="304" y="244" width="1" height="1" fill="#00c400"/><rect x="305" y="244" width="1" height="1" fill="#00c400"/><rect x="306" y="244" width="1" height="1" fill="#00c400"/><rect x="307" y="244" width="1" height="1" fill="#00c400"/><rect x="308" y="244" width="1" height="1" fill="#00c400"/><rect x="309" y="244" width="1" height="1" fill="#00c400"/><rect x="310" y="244" width="1" height="1" fill="#00c400"/><rect x="311" y="244" width="1" height="1" fill="#00c400"/><rect x="312" y="244" width="1" height="1" fill="#00c400"/><rect x="313" y="244" width="1" height="1" fill="#00c400"/><rect x="314" y="244" width="1" height="1" fill="#00c400"/><rect x="315" y="244" width="1" height="1" fill="#00c400"/><rect x="316" y="244" width="1" height="1" fill="#00c400"/><rect x="317" y="244" width="1" height="1" fill="#00c400"/><rect x="318" y="244" width="1" height="1" fill="#00c400"/><rect x="319" y="244" width="1" height="1" fill="#00c400"/><rect x="320" y="244" width="1" height="1" fill="#00c400"/><rect x="321" y="244" width="1" height="1" fill="#00c400"/><rect x="322" y="244" width="1" height="1" fill="#00c400"/><rect x="323" y="243" width="1" height="1" fill="#00c400"/><rect x="324" y="243" width="1" height="1" fill="#00c400"/><rect x="325" y="243" width="1" height="1" fill="#00c400"/><rect x="326" y="243" width="1" height="1" fill="#00c400"/><rect x="327" y="243" width="1" height="1" fill="#00c400"/><rect x="328" y="243" width="1" height="1" fill="#00c400"/><rect x="329" y="243" width="1" height="1" fill="#00c400"/><rect x="330" y="243" width="1" height="1" fill="#00c400"/><rect x="331" y="243" width="1" height="1" fill="#00c400"/><rect x="332" y="243" width="1" height="1" fill="#00c400"/><rect x="333" y="243" width="1" height="1" fill="#00c400"/><rect x="334" y="243" width="1" height="1" fill="#00c400"/><rect x="335" y="243" width="1" height="1" fill="#00c400"/><rect x="336" y="243" width="1" height="1" fill="#00c400"/><rect x="337" y="243" width="1" height="1" fill="#00c400"/><rect x="338" y="243" width="1" height="1" fill="#00c400"/><rect x="339" y="243" width="1" height="1" fill="#00c400"/><rect x="340" y="243" width="1" height="1" fill="#00c400"/><rect x="341" y="243" width="1" height="1" fill="#00c400"/><rect x="342" y="243" width="1" height="1" fill="#00c400"/><rect x="343" y="242" width="1" height="1" fill="#00c400"/><rect x="344" y="242" width="1" height="1" fill="#00c400"/><rect x="345" y="242" width="1" height="1" fill="#00c400"/><rect x="346" y="242" width="1" height="1" fill="#00c400"/><rect x="347" y="242" width="1" height="1" fill="#00c400"/><rect x="348" y="242" width="1" height="1" fill="#00c400"/><rect x="349" y="242" width="1" height="1" fill="#00c400"/><rect x="350" y="242" width="1" height="1" fill="#00c400"/><rect x="351" y="242" width="1" height="1" fill="#00c400"/><rect x="352" y="242" width="1" height="1" fill="#00c400"/><rect x="353" y="242" width="1" height="1" fill="#00c400"/><rect x="354" y="242" width="1" height="1" fill="#00c400"/><rect x="355" y="242" width="1" height="1" fill="#00c400"/><rect x="356" y="242" width="1" height="1" fill="#00c400"/><rect x="357" y="242" width="1" height="1" fill="#00c400"/><rect x="358" y="242" width="1" height="1" fill="#00c400"/><rect x="359" y="242" width="1" height="1" fill="#00c400"/><rect x="360" y="242" width="1" height="1" fill="#00c400"/><rect x="361" y="242" width="1" height="1" fill="#00c400"/><rect x="362" y="241" width="1" height="1" fill="#00c400"/><rect x="363" y="241" width="1" height="1" fill="#00c400"/><rect x="364" y="241" width="1" height="1" fill="#00c400"/><rect x="365" y="241" width="1" height="1" fill="#00c400"/><rect x="366" y="241" width="1" height="1" fill="#00c400"/><rect x="367" y="241" width="1" height="1" fill="#00c400"/><rect x="368" y="241" width="1" height="1" fill="#00c400"/><rect x="369" y="241" width="1" height="1" fill="#00c400"/><rect x="370" y="241" width="1" height="1" fill="#00c400"/><rect x="371" y="241" width="1" height="1" fill="#00c400"/><rect x="372" y="241" width="1" height="1" fill="#00c400"/><rect x="373" y="241" width="1" height="1" fill="#00c400"/><rect x="374" y="241" width="1" height="1" fill="#00c400"/><rect x="375" y="241" width="1" height="1" fill="#00c400"/><rect x="376" y="241" width="1" height="1" fill="#00c400"/><rect x="377" y="241" width="1" height="1" fill="#00c400"/><rect x="378" y="241" width="1" height="1" fill="#00c400"/><rect x="379" y="241" width="1" height="1" fill="#00c400"/><rect x="380" y="241" width="1" height="1" fill="#00c400"/><rect x="381" y="241" width="1" height="1" fill="#00c400"/><rect x="382" y="240" width="1" height="1" fill="#00c400"/><rect x="383" y="240" width="1" height="1" fill="#00c400"/><rect x="384" y="240" width="1" height="1" fill="#00c400"/><rect x="385" y="240" width="1" height="1" fill="#00c400"/><rect x="386" y="240" width="1" height="1" fill="#00c400"/><rect x="387" y="240" width="1" height="1" fill="#00c400"/><rect x="388" y="240" width="1" height="1" fill="#00c400"/><rect x="389" y="240" width="1" height="1" fill="#00c400"/><rect x="390" y="240" width="1" height="1" fill="#00c400"/><rect x="391" y="240" width="1" height="1" fill="#00c400"/><rect x="392" y="240" width="1" height="1" fill="#00c400"/><rect x="393" y="240" width="1" height="1" fill="#00c400"/><rect x="394" y="240" width="1" height="1" fill="#00c400"/><rect x="395" y="240" width="1" height="1" fill="#00c400"/><rect x="396" y="240" width="1" height="1" fill="#00c400"/><rect x="397" y="240" width="1" height="1" fill="#00c400"/><rect x="398" y="240" width="1" height="1" fill="#00c400"/><rect x="399" y="240" width="1" height="1" fill="#00c400"/><rect x="400" y="240" width="1" height="1" fill="#00c400"/><rect x="401" y="240" width="1" height="1" fill="#00c400"/><rect x="402" y="239" width="1" height="1" fill="#00c400"/><rect x="403" y="239" width="1" height="1" fill="#00c400"/><rect x="404" y="239" width="1" height="1" fill="#00c400"/><rect x="405" y="239" width="1" height="1" fill="#00c400"/><rect x="406" y="239" width="1" height="1" fill="#00c400"/><rect x="407" y="239" width="1" height="1" fill="#00c400"/><rect x="408" y="239" width="1" height="1" fill="#00c400"/><rect x="409" y="239" width="1" height="1" fill="#00c400"/><rect x="410" y="239" width="1" height="1" fill="#00c400"/><rect x="411" y="239" width="1" height="1" fill="#00c400"/><rect x="412" y="239" width="1" height="1" fill="#00c400"/><rect x="413" y="239" width="1" height="1" fill="#00c400"/><rect x="414" y="239" width="1" height="1" fill="#00c400"/><rect x="415" y="239" width="1" height="1" fill="#00c400"/><rect x="416" y="239" width="1" height="1" fill="#00c400"/><rect x="417" y="239" width="1" height="1" fill="#00c400"/><rect x="418" y="239" width="1" height="1" fill="#00c400"/><rect x="419" y="239" width="1" height="1" fill="#00c400"/><rect x="420" y="239" width="1" height="1" fill="#00c400"/><rect x="421" y="239" width="1" height="1" fill="#00c400"/><rect x="422" y="238" width="1" height="1" fill="#00c400"/><rect x="423" y="238" width="1" height="1" fill="#00c400"/><rect x="424" y="238" width="1" height="1" fill="#00c400"/><rect x="425" y="238" width="1" height="1" fill="#00c400"/><rect x="426" y="238" width="1" height="1" fill="#00c400"/><rect x="427" y="238" width="1" height="1" fill="#00c400"/><rect x="48" y="428" width="1" height="7" fill="#a0ff10"/><rect x="48" y="432" width="1" height="3" fill="#48f000"/><rect x="48" y="426" width="1" height="2" fill="#ffff00"/><rect x="49" y="428" width="1" height="7" fill="#a0ff10"/><rect x="49" y="432" width="1" height="3" fill="#48f000"/><rect x="50" y="428" width="1" height="7" fill="#a0ff10"/><rect x="50" y="433" width="1" height="2" fill="#48f000"/><rect x="51" y="429" width="1" height="6" fill="#a0ff10"/><rect x="51" y="432" width="1" height="3" fill="#48f000"/><rect x="52" y="428" width="1" height="7" fill="#a0ff10"/><rect x="52" y="433" width="1" height="2" fill="#48f000"/><rect x="53" y="428" width="1" height="7" fill="#a0ff10"/><rect x="53" y="433" width="1" height="2" fill="#48f000"/><rect x="54" y="428" width="1" height="7" fill="#a0ff10"/><rect x="54" y="432" width="1" height="3" fill="#48f000"/><rect x="55" y="429" width="1" height="6" fill="#a0ff10"/><rect x="55" y="432" width="1" height="3" fill="#48f000"/><rect x="56" y="428" width="1" height="7" fill="#a0ff10"/><rect x="56" y="432" width="1" height="3" fill="#48f000"/><rect x="57" y="428" width="1" height="7" fill="#a0ff10"/><rect x="57" y="433" width="1" height="2" fill="#48f000"/><rect x="58" y="428" width="1" height="7" fill="#a0ff10"/><rect x="58" y="433" width="1" height="2" fill="#48f000"/><rect x="59" y="428" width="1" height="7" fill="#a0ff10"/><rect x="59" y="432" width="1" height="3" fill="#48f000"/><rect x="60" y="429" width="1" height="6" fill="#a0ff10"/><rect x="60" y="433" width="1" height="2" fill="#48f000"/><rect x="61" y="426" width="1" height="9" fill="#b8ff00"/><rect x="61" y="432" width="1" height="3" fill="#48f000"/><rect x="62" y="426" width="1" height="9" fill="#b8ff00"/><rect x="62" y="433" width="1" height="2" fill="#48f000"/><rect x="63" y="426" width="1" height="9" fill="#b8ff00"/><rect x="63" y="433" width="1" height="2" fill="#48f000"/><rect x="64" y="426" width="1" height="9" fill="#b8ff00"/><rect x="64" y="432" width="1" height="3" fill="#48f000"/><rect x="65" y="426" width="1" height="9" fill="#b8ff00"/><rect x="65" y="432" width="1" height="3" fill="#48f000"/><rect x="66" y="428" width="1" height="7" fill="#a0ff10"/><rect x="66" y="433" width="1" height="2" fill="#48f000"/><rect x="67" y="428" width="1" height="7" fill="#a0ff10"/><rect x="67" y="432" width="1" height="3" fill="#48f000"/><rect x="68" y="429" width="1" height="6" fill="#a0ff10"/><rect x="68" y="433" width="1" height="2" fill="#48f000"/><rect x="69" y="431" width="1" height="4" fill="#a0ff10"/><rect x="69" y="432" width="1" height="3" fill="#48f000"/><rect x="70" y="429" width="1" height="6" fill="#a0ff10"/><rect x="70" y="432" width="1" height="3" fill="#48f000"/><rect x="71" y="429" width="1" height="6" fill="#a0ff10"/><rect x="71" y="433" width="1" height="2" fill="#48f000"/><rect x="72" y="431" width="1" height="4" fill="#a0ff10"/><rect x="72" y="432" width="1" height="3" fill="#48f000"/><rect x="73" y="428" width="1" height="7" fill="#a0ff10"/><rect x="73" y="432" width="1" height="3" fill="#48f000"/><rect x="74" y="428" width="1" height="7" fill="#a0ff10"/><rect x="74" y="432" width="1" height="3" fill="#48f000"/><rect x="75" y="428" width="1" height="7" fill="#a0ff10"/><rect x="75" y="433" width="1" height="2" fill="#48f000"/><rect x="76" y="429" width="1" height="6" fill="#a0ff10"/><rect x="76" y="433" width="1" height="2" fill="#48f000"/><rect x="77" y="428" width="1" height="7" fill="#a0ff10"/><rect x="77" y="433" width="1" height="2" fill="#48f000"/><rect x="78" y="426" width="1" height="9" fill="#b8ff00"/><rect x="78" y="433" width="1" height="2" fill="#48f000"/><rect x="79" y="426" width="1" height="9" fill="#b8ff00"/><rect x="79" y="432" width="1" height="3" fill="#48f000"/><rect x="80" y="426" width="1" height="9" fill="#b8ff00"/><rect x="80" y="433" width="1" height="2" fill="#48f000"/><rect x="81" y="429" width="1" height="6" fill="#a0ff10"/><rect x="81" y="432" width="1" height="3" fill="#48f000"/><rect x="82" y="428" width="1" height="7" fill="#a0ff10"/><rect x="82" y="432" width="1" height="3" fill="#48f000"/><rect x="82" y="427" width="1" height="1" fill="#ffff00"/><rect x="83" y="428" width="1" height="7" fill="#a0ff10"/><rect x="83" y="432" width="1" height="3" fill="#48f000"/><rect x="84" y="428" width="1" height="7" fill="#a0ff10"/><rect x="84" y="433" width="1" height="2" fill="#48f000"/><rect x="85" y="431" width="1" height="4" fill="#a0ff10"/><rect x="85" y="432" width="1" height="3" fill="#48f000"/><rect x="86" y="428" width="1" height="7" fill="#a0ff10"/><rect x="86" y="432" width="1" height="3" fill="#48f000"/><rect x="87" y="426" width="1" height="9" fill="#b8ff00"/><rect x="87" y="432" width="1" height="3" fill="#48f000"/><rect x="88" y="426" width="1" height="9" fill="#b8ff00"/><rect x="88" y="432" width="1" height="3" fill="#48f000"/><rect x="89" y="431" width="1" height="4" fill="#a0ff10"/><rect x="89" y="432" width="1" height="3" fill="#48f000"/><rect x="90" y="428" width="1" height="7" fill="#a0ff10"/><rect x="90" y="433" width="1" height="2" fill="#48f000"/><rect x="91" y="428" width="1" height="7" fill="#a0ff10"/><rect x="91" y="433" width="1" height="2" fill="#48f000"/><rect x="92" y="429" width="1" height="6" fill="#a0ff10"/><rect x="92" y="432" width="1" height="3" fill="#48f000"/><rect x="93" y="428" width="1" height="7" fill="#a0ff10"/><rect x="93" y="433" width="1" height="2" fill="#48f000"/><rect x="94" y="428" width="1" height="7" fill="#a0ff10"/><rect x="94" y="432" width="1" height="3" fill="#48f000"/><rect x="95" y="428" width="1" height="7" fill="#a0ff10"/><rect x="95" y="432" width="1" height="3" fill="#48f000"/><rect x="96" y="428" width="1" height="7" fill="#a0ff10"/><rect x="96" y="432" width="1" height="3" fill="#48f000"/><rect x="97" y="428" width="1" height="7" fill="#a0ff10"/><rect x="97" y="432" width="1" height="3" fill="#48f000"/><rect x="98" y="428" width="1" height="7" fill="#a0ff10"/><rect x="98" y="432" width="1" height="3" fill="#48f000"/><rect x="99" y="428" width="1" height="7" fill="#a0ff10"/><rect x="99" y="432" width="1" height="3" fill="#48f000"/><rect x="100" y="428" width="1" height="7" fill="#a0ff10"/><rect x="100" y="432" width="1" height="3" fill="#48f000"/><rect x="101" y="428" width="1" height="7" fill="#a0ff10"/><rect x="101" y="432" width="1" height="3" fill="#48f000"/><rect x="102" y="428" width="1" height="7" fill="#a0ff10"/><rect x="102" y="432" width="1" height="3" fill="#48f000"/><rect x="103" y="426" width="1" height="9" fill="#b8ff00"/><rect x="103" y="432" width="1" height="3" fill="#48f000"/><rect x="104" y="426" width="1" height="9" fill="#b8ff00"/><rect x="104" y="433" width="1" height="2" fill="#48f000"/><rect x="104" y="423" width="1" height="3" fill="#ffff00"/><rect x="105" y="426" width="1" height="9" fill="#b8ff00"/><rect x="105" y="432" width="1" height="3" fill="#48f000"/><rect x="106" y="426" width="1" height="9" fill="#b8ff00"/><rect x="106" y="432" width="1" height="3" fill="#48f000"/><rect x="107" y="426" width="1" height="9" fill="#b8ff00"/><rect x="107" y="433" width="1" height="2" fill="#48f000"/><rect x="108" y="429" width="1" height="6" fill="#a0ff10"/><rect x="108" y="432" width="1" height="3" fill="#48f000"/><rect x="109" y="429" width="1" height="6" fill="#a0ff10"/><rect x="109" y="432" width="1" height="3" fill="#48f000"/><rect x="110" y="428" width="1" height="7" fill="#a0ff10"/><rect x="110" y="433" width="1" height="2" fill="#48f000"/><rect x="111" y="431" width="1" height="4" fill="#a0ff10"/><rect x="111" y="432" width="1" height="3" fill="#48f000"/><rect x="112" y="428" width="1" height="7" fill="#a0ff10"/><rect x="112" y="432" width="1" height="3" fill="#48f000"/><rect x="113" y="428" width="1" height="7" fill="#a0ff10"/><rect x="113" y="433" width="1" height="2" fill="#48f000"/><rect x="114" y="428" width="1" height="7" fill="#a0ff10"/><rect x="114" y="433" width="1" height="2" fill="#48f000"/><rect x="114" y="425" width="1" height="3" fill="#ffff00"/><rect x="115" y="428" width="1" height="7" fill="#a0ff10"/><rect x="115" y="433" width="1" height="2" fill="#48f000"/><rect x="116" y="426" width="1" height="9" fill="#b8ff00"/><rect x="116" y="433" width="1" height="2" fill="#48f000"/><rect x="117" y="426" width="1" height="9" fill="#b8ff00"/><rect x="117" y="432" width="1" height="3" fill="#48f000"/><rect x="117" y="423" width="1" height="3" fill="#ffff00"/><rect x="118" y="426" width="1" height="9" fill="#b8ff00"/><rect x="118" y="432" width="1" height="3" fill="#48f000"/><rect x="119" y="426" width="1" height="9" fill="#b8ff00"/><rect x="119" y="432" width="1" height="3" fill="#48f000"/><rect x="119" y="426" width="1" height="0" fill="#ffff00"/><rect x="120" y="428" width="1" height="7" fill="#a0ff10"/><rect x="120" y="433" width="1" height="2" fill="#48f000"/><rect x="121" y="428" width="1" height="7" fill="#a0ff10"/><rect x="121" y="432" width="1" height="3" fill="#48f000"/><rect x="122" y="428" width="1" height="7" fill="#a0ff10"/><rect x="122" y="432" width="1" height="3" fill="#48f000"/><rect x="123" y="428" width="1" height="7" fill="#a0ff10"/><rect x="123" y="432" width="1" height="3" fill="#48f000"/><rect x="124" y="429" width="1" height="6" fill="#a0ff10"/><rect x="124" y="432" width="1" height="3" fill="#48f000"/><rect x="125" y="426" width="1" height="9" fill="#b8ff00"/><rect x="125" y="432" width="1" height="3" fill="#48f000"/><rect x="126" y="426" width="1" height="9" fill="#b8ff00"/><rect x="126" y="433" width="1" height="2" fill="#48f000"/><rect x="127" y="426" width="1" height="9" fill="#b8ff00"/><rect x="127" y="433" width="1" height="2" fill="#48f000"/><rect x="128" y="431" width="1" height="4" fill="#a0ff10"/><rect x="128" y="432" width="1" height="3" fill="#48f000"/><rect x="129" y="428" width="1" height="7" fill="#a0ff10"/><rect x="129" y="432" width="1" height="3" fill="#48f000"/><rect x="130" y="428" width="1" height="7" fill="#a0ff10"/><rect x="130" y="433" width="1" height="2" fill="#48f000"/><rect x="131" y="428" width="1" height="7" fill="#a0ff10"/><rect x="131" y="433" width="1" height="2" fill="#48f000"/><rect x="132" y="431" width="1" height="4" fill="#a0ff10"/><rect x="132" y="432" width="1" height="3" fill="#48f000"/><rect x="133" y="426" width="1" height="9" fill="#b8ff00"/><rect x="133" y="432" width="1" height="3" fill="#48f000"/><rect x="134" y="426" width="1" height="9" fill="#b8ff00"/><rect x="134" y="432" width="1" height="3" fill="#48f000"/><rect x="135" y="426" width="1" height="9" fill="#b8ff00"/><rect x="135" y="432" width="1" height="3" fill="#48f000"/><rect x="136" y="426" width="1" height="9" fill="#b8ff00"/><rect x="136" y="432" width="1" height="3" fill="#48f000"/><rect x="137" y="426" width="1" height="9" fill="#b8ff00"/><rect x="137" y="433" width="1" height="2" fill="#48f000"/><rect x="138" y="431" width="1" height="4" fill="#a0ff10"/><rect x="138" y="433" width="1" height="2" fill="#48f000"/><rect x="139" y="429" width="1" height="6" fill="#a0ff10"/><rect x="139" y="432" width="1" height="3" fill="#48f000"/><rect x="140" y="429" width="1" height="6" fill="#a0ff10"/><rect x="140" y="432" width="1" height="3" fill="#48f000"/><rect x="141" y="426" width="1" height="9" fill="#b8ff00"/><rect x="141" y="433" width="1" height="2" fill="#48f000"/><rect x="142" y="426" width="1" height="9" fill="#b8ff00"/><rect x="142" y="432" width="1" height="3" fill="#48f000"/><rect x="143" y="428" width="1" height="7" fill="#a0ff10"/><rect x="143" y="433" width="1" height="2" fill="#48f000"/><rect x="143" y="423" width="1" height="5" fill="#ffff00"/><rect x="144" y="428" width="1" height="7" fill="#a0ff10"/><rect x="144" y="432" width="1" height="3" fill="#48f000"/><rect x="145" y="428" width="1" height="7" fill="#a0ff10"/><rect x="145" y="432" width="1" height="3" fill="#48f000"/><rect x="146" y="428" width="1" height="7" fill="#a0ff10"/><rect x="146" y="432" width="1" height="3" fill="#48f000"/><rect x="147" y="428" width="1" height="7" fill="#a0ff10"/><rect x="147" y="433" width="1" height="2" fill="#48f000"/><rect x="148" y="431" width="1" height="4" fill="#a0ff10"/><rect x="148" y="433" width="1" height="2" fill="#48f000"/><rect x="149" y="428" width="1" height="7" fill="#a0ff10"/><rect x="149" y="432" width="1" height="3" fill="#48f000"/><rect x="150" y="431" width="1" height="4" fill="#a0ff10"/><rect x="150" y="432" width="1" height="3" fill="#48f000"/><rect x="150" y="427" width="1" height="4" fill="#ffff00"/><rect x="151" y="428" width="1" height="7" fill="#a0ff10"/><rect x="151" y="433" width="1" height="2" fill="#48f000"/><rect x="152" y="429" width="1" height="6" fill="#a0ff10"/><rect x="152" y="433" width="1" height="2" fill="#48f000"/><rect x="152" y="425" width="1" height="4" fill="#ffff00"/><rect x="153" y="429" width="1" height="6" fill="#a0ff10"/><rect x="153" y="432" width="1" height="3" fill="#48f000"/><rect x="154" y="428" width="1" height="7" fill="#a0ff10"/><rect x="154" y="432" width="1" height="3" fill="#48f000"/><rect x="155" y="426" width="1" height="9" fill="#b8ff00"/><rect x="155" y="432" width="1" height="3" fill="#48f000"/><rect x="156" y="426" width="1" height="9" fill="#b8ff00"/><rect x="156" y="433" width="1" height="2" fill="#48f000"/><rect x="157" y="426" width="1" height="9" fill="#b8ff00"/><rect x="157" y="433" width="1" height="2" fill="#48f000"/><rect x="158" y="426" width="1" height="9" fill="#b8ff00"/><rect x="158" y="433" width="1" height="2" fill="#48f000"/><rect x="159" y="428" width="1" height="7" fill="#a0ff10"/><rect x="159" y="432" width="1" height="3" fill="#48f000"/><rect x="160" y="429" width="1" height="6" fill="#a0ff10"/><rect x="160" y="432" width="1" height="3" fill="#48f000"/><rect x="161" y="428" width="1" height="7" fill="#a0ff10"/><rect x="161" y="432" width="1" height="3" fill="#48f000"/><rect x="162" y="428" width="1" height="7" fill="#a0ff10"/><rect x="162" y="432" width="1" height="3" fill="#48f000"/><rect x="163" y="429" width="1" height="6" fill="#a0ff10"/><rect x="163" y="432" width="1" height="3" fill="#48f000"/><rect x="164" y="428" width="1" height="7" fill="#a0ff10"/><rect x="164" y="433" width="1" height="2" fill="#48f000"/><rect x="165" y="429" width="1" height="6" fill="#a0ff10"/><rect x="165" y="433" width="1" height="2" fill="#48f000"/><rect x="166" y="429" width="1" height="6" fill="#a0ff10"/><rect x="166" y="432" width="1" height="3" fill="#48f000"/><rect x="167" y="428" width="1" height="7" fill="#a0ff10"/><rect x="167" y="433" width="1" height="2" fill="#48f000"/><rect x="168" y="428" width="1" height="7" fill="#a0ff10"/><rect x="168" y="433" width="1" height="2" fill="#48f000"/><rect x="169" y="428" width="1" height="7" fill="#a0ff10"/><rect x="169" y="433" width="1" height="2" fill="#48f000"/><rect x="170" y="429" width="1" height="6" fill="#a0ff10"/><rect x="170" y="432" width="1" height="3" fill="#48f000"/><rect x="171" y="431" width="1" height="4" fill="#a0ff10"/><rect x="171" y="432" width="1" height="3" fill="#48f000"/><rect x="172" y="429" width="1" height="6" fill="#a0ff10"/><rect x="172" y="433" width="1" height="2" fill="#48f000"/><rect x="173" y="428" width="1" height="7" fill="#a0ff10"/><rect x="173" y="432" width="1" height="3" fill="#48f000"/><rect x="174" y="428" width="1" height="7" fill="#a0ff10"/><rect x="174" y="432" width="1" height="3" fill="#48f000"/><rect x="175" y="428" width="1" height="7" fill="#a0ff10"/><rect x="175" y="432" width="1" height="3" fill="#48f000"/><rect x="176" y="429" width="1" height="6" fill="#a0ff10"/><rect x="176" y="432" width="1" height="3" fill="#48f000"/><rect x="177" y="431" width="1" height="4" fill="#a0ff10"/><rect x="177" y="432" width="1" height="3" fill="#48f000"/><rect x="178" y="428" width="1" height="7" fill="#a0ff10"/><rect x="178" y="432" width="1" height="3" fill="#48f000"/><rect x="179" y="428" width="1" height="7" fill="#a0ff10"/><rect x="179" y="433" width="1" height="2" fill="#48f000"/><rect x="180" y="428" width="1" height="7" fill="#a0ff10"/><rect x="180" y="432" width="1" height="3" fill="#48f000"/><rect x="181" y="429" width="1" height="6" fill="#a0ff10"/><rect x="181" y="433" width="1" height="2" fill="#48f000"/><rect x="182" y="426" width="1" height="9" fill="#b8ff00"/><rect x="182" y="432" width="1" height="3" fill="#48f000"/><rect x="183" y="426" width="1" height="9" fill="#b8ff00"/><rect x="183" y="432" width="1" height="3" fill="#48f000"/><rect x="184" y="426" width="1" height="9" fill="#b8ff00"/><rect x="184" y="432" width="1" height="3" fill="#48f000"/><rect x="185" y="426" width="1" height="9" fill="#b8ff00"/><rect x="185" y="433" width="1" height="2" fill="#48f000"/><rect x="186" y="428" width="1" height="7" fill="#a0ff10"/><rect x="186" y="433" width="1" height="2" fill="#48f000"/><rect x="187" y="429" width="1" height="6" fill="#a0ff10"/><rect x="187" y="432" width="1" height="3" fill="#48f000"/><rect x="188" y="428" width="1" height="7" fill="#a0ff10"/><rect x="188" y="433" width="1" height="2" fill="#48f000"/><rect x="189" y="428" width="1" height="7" fill="#a0ff10"/><rect x="189" y="432" width="1" height="3" fill="#48f000"/><rect x="189" y="427" width="1" height="1" fill="#ffff00"/><rect x="190" y="429" width="1" height="6" fill="#a0ff10"/><rect x="190" y="432" width="1" height="3" fill="#48f000"/><rect x="191" y="428" width="1" height="7" fill="#a0ff10"/><rect x="191" y="432" width="1" height="3" fill="#48f000"/><rect x="191" y="424" width="1" height="4" fill="#ffff00"/><rect x="192" y="431" width="1" height="4" fill="#a0ff10"/><rect x="192" y="432" width="1" height="3" fill="#48f000"/><rect x="193" y="428" width="1" height="7" fill="#a0ff10"/><rect x="193" y="433" width="1" height="2" fill="#48f000"/><rect x="194" y="428" width="1" height="7" fill="#a0ff10"/><rect x="194" y="432" width="1" height="3" fill="#48f000"/><rect x="195" y="428" width="1" height="7" fill="#a0ff10"/><rect x="195" y="432" width="1" height="3" fill="#48f000"/><rect x="196" y="429" width="1" height="6" fill="#a0ff10"/><rect x="196" y="432" width="1" height="3" fill="#48f000"/><rect x="197" y="428" width="1" height="7" fill="#a0ff10"/><rect x="197" y="432" width="1" height="3" fill="#48f000"/><rect x="198" y="429" width="1" height="6" fill="#a0ff10"/><rect x="198" y="432" width="1" height="3" fill="#48f000"/><rect x="199" y="429" width="1" height="6" fill="#a0ff10"/><rect x="199" y="432" width="1" height="3" fill="#48f000"/><rect x="200" y="428" width="1" height="7" fill="#a0ff10"/><rect x="200" y="432" width="1" height="3" fill="#48f000"/><rect x="201" y="431" width="1" height="4" fill="#a0ff10"/><rect x="201" y="432" width="1" height="3" fill="#48f000"/><rect x="202" y="431" width="1" height="4" fill="#a0ff10"/><rect x="202" y="433" width="1" height="2" fill="#48f000"/><rect x="203" y="429" width="1" height="6" fill="#a0ff10"/><rect x="203" y="432" width="1" height="3" fill="#48f000"/><rect x="204" y="428" width="1" height="7" fill="#a0ff10"/><rect x="204" y="432" width="1" height="3" fill="#48f000"/><rect x="205" y="428" width="1" height="7" fill="#a0ff10"/><rect x="205" y="432" width="1" height="3" fill="#48f000"/><rect x="206" y="428" width="1" height="7" fill="#a0ff10"/><rect x="206" y="432" width="1" height="3" fill="#48f000"/><rect x="207" y="428" width="1" height="7" fill="#a0ff10"/><rect x="207" y="433" width="1" height="2" fill="#48f000"/><rect x="208" y="428" width="1" height="7" fill="#a0ff10"/><rect x="208" y="432" width="1" height="3" fill="#48f000"/><rect x="209" y="428" width="1" height="7" fill="#a0ff10"/><rect x="209" y="432" width="1" height="3" fill="#48f000"/><rect x="210" y="431" width="1" height="4" fill="#a0ff10"/><rect x="210" y="432" width="1" height="3" fill="#48f000"/><rect x="211" y="428" width="1" height="7" fill="#a0ff10"/><rect x="211" y="432" width="1" height="3" fill="#48f000"/><rect x="212" y="428" width="1" height="7" fill="#a0ff10"/><rect x="212" y="433" width="1" height="2" fill="#48f000"/><rect x="213" y="431" width="1" height="4" fill="#a0ff10"/><rect x="213" y="433" width="1" height="2" fill="#48f000"/><rect x="214" y="431" width="1" height="4" fill="#a0ff10"/><rect x="214" y="432" width="1" height="3" fill="#48f000"/><rect x="215" y="428" width="1" height="7" fill="#a0ff10"/><rect x="215" y="432" width="1" height="3" fill="#48f000"/><rect x="216" y="428" width="1" height="7" fill="#a0ff10"/><rect x="216" y="433" width="1" height="2" fill="#48f000"/><rect x="217" y="428" width="1" height="7" fill="#a0ff10"/><rect x="217" y="432" width="1" height="3" fill="#48f000"/><rect x="218" y="428" width="1" height="7" fill="#a0ff10"/><rect x="218" y="433" width="1" height="2" fill="#48f000"/><rect x="219" y="426" width="1" height="9" fill="#b8ff00"/><rect x="219" y="432" width="1" height="3" fill="#48f000"/><rect x="219" y="427" width="1" height="-1" fill="#ffff00"/><rect x="220" y="426" width="1" height="9" fill="#b8ff00"/><rect x="220" y="432" width="1" height="3" fill="#48f000"/><rect x="221" y="426" width="1" height="9" fill="#b8ff00"/><rect x="221" y="433" width="1" height="2" fill="#48f000"/><rect x="222" y="426" width="1" height="9" fill="#b8ff00"/><rect x="222" y="432" width="1" height="3" fill="#48f000"/><rect x="223" y="426" width="1" height="9" fill="#b8ff00"/><rect x="223" y="433" width="1" height="2" fill="#48f000"/><rect x="224" y="428" width="1" height="7" fill="#a0ff10"/><rect x="224" y="432" width="1" height="3" fill="#48f000"/><rect x="225" y="429" width="1" height="6" fill="#a0ff10"/><rect x="225" y="432" width="1" height="3" fill="#48f000"/><rect x="226" y="428" width="1" height="7" fill="#a0ff10"/><rect x="226" y="432" width="1" height="3" fill="#48f000"/><rect x="227" y="426" width="1" height="9" fill="#b8ff00"/><rect x="227" y="433" width="1" height="2" fill="#48f000"/><rect x="228" y="426" width="1" height="9" fill="#b8ff00"/><rect x="228" y="432" width="1" height="3" fill="#48f000"/><rect x="229" y="429" width="1" height="6" fill="#a0ff10"/><rect x="229" y="433" width="1" height="2" fill="#48f000"/><rect x="229" y="427" width="1" height="2" fill="#ffff00"/><rect x="230" y="428" width="1" height="7" fill="#a0ff10"/><rect x="230" y="432" width="1" height="3" fill="#48f000"/><rect x="231" y="431" width="1" height="4" fill="#a0ff10"/><rect x="231" y="432" width="1" height="3" fill="#48f000"/><rect x="232" y="431" width="1" height="4" fill="#a0ff10"/><rect x="232" y="433" width="1" height="2" fill="#48f000"/><rect x="233" y="428" width="1" height="7" fill="#a0ff10"/><rect x="233" y="433" width="1" height="2" fill="#48f000"/><rect x="234" y="428" width="1" height="7" fill="#a0ff10"/><rect x="234" y="432" width="1" height="3" fill="#48f000"/><rect x="235" y="428" width="1" height="7" fill="#a0ff10"/><rect x="235" y="432" width="1" height="3" fill="#48f000"/><rect x="236" y="428" width="1" height="7" fill="#a0ff10"/><rect x="236" y="432" width="1" height="3" fill="#48f000"/><rect x="237" y="428" width="1" height="7" fill="#a0ff10"/><rect x="237" y="433" width="1" height="2" fill="#48f000"/><rect x="238" y="429" width="1" height="6" fill="#a0ff10"/><rect x="238" y="433" width="1" height="2" fill="#48f000"/><rect x="239" y="428" width="1" height="7" fill="#a0ff10"/><rect x="239" y="432" width="1" height="3" fill="#48f000"/><rect x="240" y="426" width="1" height="9" fill="#b8ff00"/><rect x="240" y="433" width="1" height="2" fill="#48f000"/><rect x="241" y="426" width="1" height="9" fill="#b8ff00"/><rect x="241" y="432" width="1" height="3" fill="#48f000"/><rect x="242" y="426" width="1" height="9" fill="#b8ff00"/><rect x="242" y="432" width="1" height="3" fill="#48f000"/><rect x="243" y="428" width="1" height="7" fill="#a0ff10"/><rect x="243" y="432" width="1" height="3" fill="#48f000"/><rect x="244" y="431" width="1" height="4" fill="#a0ff10"/><rect x="244" y="433" width="1" height="2" fill="#48f000"/><rect x="245" y="428" width="1" height="7" fill="#a0ff10"/><rect x="245" y="432" width="1" height="3" fill="#48f000"/><rect x="246" y="426" width="1" height="9" fill="#b8ff00"/><rect x="246" y="432" width="1" height="3" fill="#48f000"/><rect x="246" y="426" width="1" height="0" fill="#ffff00"/><rect x="247" y="426" width="1" height="9" fill="#b8ff00"/><rect x="247" y="432" width="1" height="3" fill="#48f000"/><rect x="248" y="426" width="1" height="9" fill="#b8ff00"/><rect x="248" y="432" width="1" height="3" fill="#48f000"/><rect x="249" y="429" width="1" height="6" fill="#a0ff10"/><rect x="249" y="432" width="1" height="3" fill="#48f000"/><rect x="249" y="427" width="1" height="2" fill="#ffff00"/><rect x="250" y="428" width="1" height="7" fill="#a0ff10"/><rect x="250" y="432" width="1" height="3" fill="#48f000"/><rect x="251" y="431" width="1" height="4" fill="#a0ff10"/><rect x="251" y="432" width="1" height="3" fill="#48f000"/><rect x="252" y="428" width="1" height="7" fill="#a0ff10"/><rect x="252" y="432" width="1" height="3" fill="#48f000"/><rect x="253" y="428" width="1" height="7" fill="#a0ff10"/><rect x="253" y="432" width="1" height="3" fill="#48f000"/><rect x="253" y="427" width="1" height="1" fill="#ffff00"/><rect x="254" y="426" width="1" height="9" fill="#b8ff00"/><rect x="254" y="433" width="1" height="2" fill="#48f000"/><rect x="255" y="426" width="1" height="9" fill="#b8ff00"/><rect x="255" y="432" width="1" height="3" fill="#48f000"/><rect x="256" y="426" width="1" height="9" fill="#b8ff00"/><rect x="256" y="432" width="1" height="3" fill="#48f000"/><rect x="257" y="426" width="1" height="9" fill="#b8ff00"/><rect x="257" y="432" width="1" height="3" fill="#48f000"/><rect x="258" y="428" width="1" height="7" fill="#a0ff10"/><rect x="258" y="432" width="1" height="3" fill="#48f000"/><rect x="259" y="428" width="1" height="7" fill="#a0ff10"/><rect x="259" y="432" width="1" height="3" fill="#48f000"/><rect x="260" y="428" width="1" height="7" fill="#a0ff10"/><rect x="260" y="432" width="1" height="3" fill="#48f000"/><rect x="261" y="428" width="1" height="7" fill="#a0ff10"/><rect x="261" y="433" width="1" height="2" fill="#48f000"/><rect x="262" y="429" width="1" height="6" fill="#a0ff10"/><rect x="262" y="432" width="1" height="3" fill="#48f000"/><rect x="263" y="428" width="1" height="7" fill="#a0ff10"/><rect x="263" y="432" width="1" height="3" fill="#48f000"/><rect x="264" y="429" width="1" height="6" fill="#a0ff10"/><rect x="264" y="432" width="1" height="3" fill="#48f000"/><rect x="265" y="426" width="1" height="9" fill="#b8ff00"/><rect x="265" y="433" width="1" height="2" fill="#48f000"/><rect x="266" y="426" width="1" height="9" fill="#b8ff00"/><rect x="266" y="432" width="1" height="3" fill="#48f000"/><rect x="267" y="429" width="1" height="6" fill="#a0ff10"/><rect x="267" y="432" width="1" height="3" fill="#48f000"/><rect x="268" y="428" width="1" height="7" fill="#a0ff10"/><rect x="268" y="432" width="1" height="3" fill="#48f000"/><rect x="269" y="429" width="1" height="6" fill="#a0ff10"/><rect x="269" y="433" width="1" height="2" fill="#48f000"/><rect x="270" y="429" width="1" height="6" fill="#a0ff10"/><rect x="270" y="432" width="1" height="3" fill="#48f000"/><rect x="271" y="426" width="1" height="9" fill="#b8ff00"/><rect x="271" y="433" width="1" height="2" fill="#48f000"/><rect x="272" y="426" width="1" height="9" fill="#b8ff00"/><rect x="272" y="433" width="1" height="2" fill="#48f000"/><rect x="273" y="428" width="1" height="7" fill="#a0ff10"/><rect x="273" y="433" width="1" height="2" fill="#48f000"/><rect x="274" y="426" width="1" height="9" fill="#b8ff00"/><rect x="274" y="433" width="1" height="2" fill="#48f000"/><rect x="275" y="426" width="1" height="9" fill="#b8ff00"/><rect x="275" y="432" width="1" height="3" fill="#48f000"/><rect x="276" y="426" width="1" height="9" fill="#b8ff00"/><rect x="276" y="433" width="1" height="2" fill="#48f000"/><rect x="277" y="428" width="1" height="7" fill="#a0ff10"/><rect x="277" y="433" width="1" height="2" fill="#48f000"/><rect x="278" y="428" width="1" height="7" fill="#a0ff10"/><rect x="278" y="432" width="1" height="3" fill="#48f000"/><rect x="279" y="429" width="1" height="6" fill="#a0ff10"/><rect x="279" y="432" width="1" height="3" fill="#48f000"/><rect x="280" y="428" width="1" height="7" fill="#a0ff10"/><rect x="280" y="432" width="1" height="3" fill="#48f000"/><rect x="281" y="428" width="1" height="7" fill="#a0ff10"/><rect x="281" y="432" width="1" height="3" fill="#48f000"/><rect x="282" y="428" width="1" height="7" fill="#a0ff10"/><rect x="282" y="432" width="1" height="3" fill="#48f000"/><rect x="282" y="425" width="1" height="3" fill="#ffff00"/><rect x="283" y="428" width="1" height="7" fill="#a0ff10"/><rect x="283" y="433" width="1" height="2" fill="#48f000"/><rect x="284" y="428" width="1" height="7" fill="#a0ff10"/><rect x="284" y="433" width="1" height="2" fill="#48f000"/><rect x="285" y="428" width="1" height="7" fill="#a0ff10"/><rect x="285" y="432" width="1" height="3" fill="#48f000"/><rect x="286" y="428" width="1" height="7" fill="#a0ff10"/><rect x="286" y="432" width="1" height="3" fill="#48f000"/><rect x="287" y="426" width="1" height="9" fill="#b8ff00"/><rect x="287" y="432" width="1" height="3" fill="#48f000"/><rect x="288" y="426" width="1" height="9" fill="#b8ff00"/><rect x="288" y="432" width="1" height="3" fill="#48f000"/><rect x="289" y="426" width="1" height="9" fill="#b8ff00"/><rect x="289" y="432" width="1" height="3" fill="#48f000"/><rect x="290" y="426" width="1" height="9" fill="#b8ff00"/><rect x="290" y="433" width="1" height="2" fill="#48f000"/><rect x="291" y="426" width="1" height="9" fill="#b8ff00"/><rect x="291" y="432" width="1" height="3" fill="#48f000"/><rect x="292" y="428" width="1" height="7" fill="#a0ff10"/><rect x="292" y="432" width="1" height="3" fill="#48f000"/><rect x="293" y="429" width="1" height="6" fill="#a0ff10"/><rect x="293" y="433" width="1" height="2" fill="#48f000"/><rect x="294" y="426" width="1" height="9" fill="#b8ff00"/><rect x="294" y="432" width="1" height="3" fill="#48f000"/><rect x="295" y="426" width="1" height="9" fill="#b8ff00"/><rect x="295" y="432" width="1" height="3" fill="#48f000"/><rect x="296" y="426" width="1" height="9" fill="#b8ff00"/><rect x="296" y="432" width="1" height="3" fill="#48f000"/><rect x="297" y="426" width="1" height="9" fill="#b8ff00"/><rect x="297" y="433" width="1" height="2" fill="#48f000"/><rect x="298" y="426" width="1" height="9" fill="#b8ff00"/><rect x="298" y="433" width="1" height="2" fill="#48f000"/><rect x="299" y="429" width="1" height="6" fill="#a0ff10"/><rect x="299" y="432" width="1" height="3" fill="#48f000"/><rect x="300" y="428" width="1" height="7" fill="#a0ff10"/><rect x="300" y="432" width="1" height="3" fill="#48f000"/><rect x="301" y="428" width="1" height="7" fill="#a0ff10"/><rect x="301" y="433" width="1" height="2" fill="#48f000"/><rect x="302" y="428" width="1" height="7" fill="#a0ff10"/><rect x="302" y="433" width="1" height="2" fill="#48f000"/><rect x="303" y="428" width="1" height="7" fill="#a0ff10"/><rect x="303" y="432" width="1" height="3" fill="#48f000"/><rect x="303" y="423" width="1" height="5" fill="#ffff00"/><rect x="304" y="428" width="1" height="7" fill="#a0ff10"/><rect x="304" y="432" width="1" height="3" fill="#48f000"/><rect x="305" y="431" width="1" height="4" fill="#a0ff10"/><rect x="305" y="432" width="1" height="3" fill="#48f000"/><rect x="306" y="428" width="1" height="7" fill="#a0ff10"/><rect x="306" y="432" width="1" height="3" fill="#48f000"/><rect x="307" y="426" width="1" height="9" fill="#b8ff00"/><rect x="307" y="432" width="1" height="3" fill="#48f000"/><rect x="308" y="426" width="1" height="9" fill="#b8ff00"/><rect x="308" y="432" width="1" height="3" fill="#48f000"/><rect x="309" y="426" width="1" height="9" fill="#b8ff00"/><rect x="309" y="432" width="1" height="3" fill="#48f000"/><rect x="310" y="426" width="1" height="9" fill="#b8ff00"/><rect x="310" y="433" width="1" height="2" fill="#48f000"/><rect x="311" y="428" width="1" height="7" fill="#a0ff10"/><rect x="311" y="433" width="1" height="2" fill="#48f000"/><rect x="312" y="428" width="1" height="7" fill="#a0ff10"/><rect x="312" y="432" width="1" height="3" fill="#48f000"/><rect x="313" y="428" width="1" height="7" fill="#a0ff10"/><rect x="313" y="432" width="1" height="3" fill="#48f000"/><rect x="314" y="428" width="1" height="7" fill="#a0ff10"/><rect x="314" y="433" width="1" height="2" fill="#48f000"/><rect x="315" y="428" width="1" height="7" fill="#a0ff10"/><rect x="315" y="433" width="1" height="2" fill="#48f000"/><rect x="316" y="426" width="1" height="9" fill="#b8ff00"/><rect x="316" y="432" width="1" height="3" fill="#48f000"/><rect x="317" y="426" width="1" height="9" fill="#b8ff00"/><rect x="317" y="432" width="1" height="3" fill="#48f000"/><rect x="318" y="426" width="1" height="9" fill="#b8ff00"/><rect x="318" y="432" width="1" height="3" fill="#48f000"/><rect x="319" y="426" width="1" height="9" fill="#b8ff00"/><rect x="319" y="432" width="1" height="3" fill="#48f000"/><rect x="320" y="426" width="1" height="9" fill="#b8ff00"/><rect x="320" y="432" width="1" height="3" fill="#48f000"/><rect x="321" y="428" width="1" height="7" fill="#a0ff10"/><rect x="321" y="432" width="1" height="3" fill="#48f000"/><rect x="322" y="428" width="1" height="7" fill="#a0ff10"/><rect x="322" y="433" width="1" height="2" fill="#48f000"/><rect x="323" y="428" width="1" height="7" fill="#a0ff10"/><rect x="323" y="432" width="1" height="3" fill="#48f000"/><rect x="324" y="428" width="1" height="7" fill="#a0ff10"/><rect x="324" y="432" width="1" height="3" fill="#48f000"/><rect x="325" y="428" width="1" height="7" fill="#a0ff10"/><rect x="325" y="432" width="1" height="3" fill="#48f000"/><rect x="326" y="428" width="1" height="7" fill="#a0ff10"/><rect x="326" y="432" width="1" height="3" fill="#48f000"/><rect x="327" y="428" width="1" height="7" fill="#a0ff10"/><rect x="327" y="432" width="1" height="3" fill="#48f000"/><rect x="328" y="429" width="1" height="6" fill="#a0ff10"/><rect x="328" y="432" width="1" height="3" fill="#48f000"/><rect x="329" y="428" width="1" height="7" fill="#a0ff10"/><rect x="329" y="433" width="1" height="2" fill="#48f000"/><rect x="330" y="428" width="1" height="7" fill="#a0ff10"/><rect x="330" y="433" width="1" height="2" fill="#48f000"/><rect x="331" y="428" width="1" height="7" fill="#a0ff10"/><rect x="331" y="432" width="1" height="3" fill="#48f000"/><rect x="331" y="427" width="1" height="1" fill="#ffff00"/><rect x="332" y="431" width="1" height="4" fill="#a0ff10"/><rect x="332" y="433" width="1" height="2" fill="#48f000"/><rect x="333" y="428" width="1" height="7" fill="#a0ff10"/><rect x="333" y="432" width="1" height="3" fill="#48f000"/><rect x="334" y="431" width="1" height="4" fill="#a0ff10"/><rect x="334" y="432" width="1" height="3" fill="#48f000"/><rect x="335" y="429" width="1" height="6" fill="#a0ff10"/><rect x="335" y="433" width="1" height="2" fill="#48f000"/><rect x="336" y="428" width="1" height="7" fill="#a0ff10"/><rect x="336" y="433" width="1" height="2" fill="#48f000"/><rect x="337" y="428" width="1" height="7" fill="#a0ff10"/><rect x="337" y="432" width="1" height="3" fill="#48f000"/><rect x="338" y="429" width="1" height="6" fill="#a0ff10"/><rect x="338" y="432" width="1" height="3" fill="#48f000"/><rect x="339" y="428" width="1" height="7" fill="#a0ff10"/><rect x="339" y="433" width="1" height="2" fill="#48f000"/><rect x="340" y="431" width="1" height="4" fill="#a0ff10"/><rect x="340" y="433" width="1" height="2" fill="#48f000"/><rect x="341" y="428" width="1" height="7" fill="#a0ff10"/><rect x="341" y="432" width="1" height="3" fill="#48f000"/><rect x="342" y="428" width="1" height="7" fill="#a0ff10"/><rect x="342" y="432" width="1" height="3" fill="#48f000"/><rect x="343" y="428" width="1" height="7" fill="#a0ff10"/><rect x="343" y="432" width="1" height="3" fill="#48f000"/><rect x="344" y="428" width="1" height="7" fill="#a0ff10"/><rect x="344" y="432" width="1" height="3" fill="#48f000"/><rect x="345" y="428" width="1" height="7" fill="#a0ff10"/><rect x="345" y="433" width="1" height="2" fill="#48f000"/><rect x="346" y="428" width="1" height="7" fill="#a0ff10"/><rect x="346" y="433" width="1" height="2" fill="#48f000"/><rect x="347" y="426" width="1" height="9" fill="#b8ff00"/><rect x="347" y="433" width="1" height="2" fill="#48f000"/><rect x="348" y="426" width="1" height="9" fill="#b8ff00"/><rect x="348" y="433" width="1" height="2" fill="#48f000"/><rect x="349" y="428" width="1" height="7" fill="#a0ff10"/><rect x="349" y="433" width="1" height="2" fill="#48f000"/><rect x="350" y="429" width="1" height="6" fill="#a0ff10"/><rect x="350" y="432" width="1" height="3" fill="#48f000"/><rect x="351" y="428" width="1" height="7" fill="#a0ff10"/><rect x="351" y="433" width="1" height="2" fill="#48f000"/><rect x="352" y="428" width="1" height="7" fill="#a0ff10"/><rect x="352" y="433" width="1" height="2" fill="#48f000"/><rect x="353" y="428" width="1" height="7" fill="#a0ff10"/><rect x="353" y="432" width="1" height="3" fill="#48f000"/><rect x="354" y="428" width="1" height="7" fill="#a0ff10"/><rect x="354" y="433" width="1" height="2" fill="#48f000"/><rect x="355" y="428" width="1" height="7" fill="#a0ff10"/><rect x="355" y="433" width="1" height="2" fill="#48f000"/><rect x="356" y="428" width="1" height="7" fill="#a0ff10"/><rect x="356" y="432" width="1" height="3" fill="#48f000"/><rect x="357" y="429" width="1" height="6" fill="#a0ff10"/><rect x="357" y="432" width="1" height="3" fill="#48f000"/><rect x="358" y="428" width="1" height="7" fill="#a0ff10"/><rect x="358" y="433" width="1" height="2" fill="#48f000"/><rect x="359" y="426" width="1" height="9" fill="#b8ff00"/><rect x="359" y="433" width="1" height="2" fill="#48f000"/><rect x="360" y="426" width="1" height="9" fill="#b8ff00"/><rect x="360" y="432" width="1" height="3" fill="#48f000"/><rect x="361" y="428" width="1" height="7" fill="#a0ff10"/><rect x="361" y="432" width="1" height="3" fill="#48f000"/><rect x="362" y="428" width="1" height="7" fill="#a0ff10"/><rect x="362" y="432" width="1" height="3" fill="#48f000"/><rect x="363" y="428" width="1" height="7" fill="#a0ff10"/><rect x="363" y="432" width="1" height="3" fill="#48f000"/><rect x="364" y="428" width="1" height="7" fill="#a0ff10"/><rect x="364" y="432" width="1" height="3" fill="#48f000"/><rect x="365" y="428" width="1" height="7" fill="#a0ff10"/><rect x="365" y="432" width="1" height="3" fill="#48f000"/><rect x="366" y="426" width="1" height="9" fill="#b8ff00"/><rect x="366" y="432" width="1" height="3" fill="#48f000"/><rect x="367" y="426" width="1" height="9" fill="#b8ff00"/><rect x="367" y="432" width="1" height="3" fill="#48f000"/><rect x="368" y="426" width="1" height="9" fill="#b8ff00"/><rect x="368" y="432" width="1" height="3" fill="#48f000"/><rect x="369" y="428" width="1" height="7" fill="#a0ff10"/><rect x="369" y="432" width="1" height="3" fill="#48f000"/><rect x="370" y="423" width="1" height="12" fill="#f0ff00"/><rect x="370" y="432" width="1" height="3" fill="#48f000"/><rect x="371" y="424" width="1" height="11" fill="#f0ff00"/><rect x="371" y="432" width="1" height="3" fill="#48f000"/><rect x="372" y="425" width="1" height="10" fill="#f0ff00"/><rect x="372" y="432" width="1" height="3" fill="#48f000"/><rect x="373" y="425" width="1" height="10" fill="#f0ff00"/><rect x="373" y="432" width="1" height="3" fill="#48f000"/><rect x="373" y="423" width="1" height="2" fill="#ffff00"/><rect x="374" y="426" width="1" height="9" fill="#b8ff00"/><rect x="374" y="433" width="1" height="2" fill="#48f000"/><rect x="375" y="424" width="1" height="11" fill="#f0ff00"/><rect x="375" y="432" width="1" height="3" fill="#48f000"/><rect x="376" y="424" width="1" height="11" fill="#f0ff00"/><rect x="376" y="432" width="1" height="3" fill="#48f000"/><rect x="377" y="424" width="1" height="11" fill="#f0ff00"/><rect x="377" y="433" width="1" height="2" fill="#48f000"/><rect x="378" y="423" width="1" height="12" fill="#f0ff00"/><rect x="378" y="432" width="1" height="3" fill="#48f000"/><rect x="379" y="421" width="1" height="14" fill="#f0ff00"/><rect x="379" y="432" width="1" height="3" fill="#48f000"/><rect x="380" y="423" width="1" height="12" fill="#f0ff00"/><rect x="380" y="433" width="1" height="2" fill="#48f000"/><rect x="381" y="421" width="1" height="14" fill="#f0ff00"/><rect x="381" y="433" width="1" height="2" fill="#48f000"/><rect x="382" y="424" width="1" height="11" fill="#f0ff00"/><rect x="382" y="432" width="1" height="3" fill="#48f000"/><rect x="383" y="428" width="1" height="7" fill="#a0ff10"/><rect x="383" y="433" width="1" height="2" fill="#48f000"/><rect x="384" y="421" width="1" height="14" fill="#f0ff00"/><rect x="384" y="432" width="1" height="3" fill="#48f000"/><rect x="384" y="423" width="1" height="-2" fill="#ffff00"/><rect x="385" y="428" width="1" height="7" fill="#a0ff10"/><rect x="385" y="432" width="1" height="3" fill="#48f000"/><rect x="386" y="425" width="1" height="10" fill="#f0ff00"/><rect x="386" y="432" width="1" height="3" fill="#48f000"/><rect x="387" y="425" width="1" height="10" fill="#f0ff00"/><rect x="387" y="433" width="1" height="2" fill="#48f000"/><rect x="388" y="424" width="1" height="11" fill="#f0ff00"/><rect x="388" y="433" width="1" height="2" fill="#48f000"/><rect x="389" y="423" width="1" height="12" fill="#f0ff00"/><rect x="389" y="432" width="1" height="3" fill="#48f000"/><rect x="390" y="424" width="1" height="11" fill="#f0ff00"/><rect x="390" y="432" width="1" height="3" fill="#48f000"/><rect x="391" y="425" width="1" height="10" fill="#f0ff00"/><rect x="391" y="432" width="1" height="3" fill="#48f000"/><rect x="392" y="421" width="1" height="14" fill="#f0ff00"/><rect x="392" y="432" width="1" height="3" fill="#48f000"/><rect x="393" y="424" width="1" height="11" fill="#f0ff00"/><rect x="393" y="432" width="1" height="3" fill="#48f000"/><rect x="394" y="423" width="1" height="12" fill="#f0ff00"/><rect x="394" y="433" width="1" height="2" fill="#48f000"/><rect x="395" y="424" width="1" height="11" fill="#f0ff00"/><rect x="395" y="433" width="1" height="2" fill="#48f000"/><rect x="396" y="424" width="1" height="11" fill="#f0ff00"/><rect x="396" y="432" width="1" height="3" fill="#48f000"/><rect x="397" y="428" width="1" height="7" fill="#a0ff10"/><rect x="397" y="432" width="1" height="3" fill="#48f000"/><rect x="398" y="421" width="1" height="14" fill="#f0ff00"/><rect x="398" y="433" width="1" height="2" fill="#48f000"/><rect x="399" y="429" width="1" height="6" fill="#a0ff10"/><rect x="399" y="432" width="1" height="3" fill="#48f000"/><rect x="400" y="424" width="1" height="11" fill="#f0ff00"/><rect x="400" y="432" width="1" height="3" fill="#48f000"/><rect x="401" y="424" width="1" height="11" fill="#f0ff00"/><rect x="401" y="432" width="1" height="3" fill="#48f000"/><rect x="402" y="424" width="1" height="11" fill="#f0ff00"/><rect x="402" y="433" width="1" height="2" fill="#48f000"/><rect x="403" y="424" width="1" height="11" fill="#f0ff00"/><rect x="403" y="432" width="1" height="3" fill="#48f000"/><rect x="404" y="426" width="1" height="9" fill="#b8ff00"/><rect x="404" y="433" width="1" height="2" fill="#48f000"/><rect x="405" y="423" width="1" height="12" fill="#f0ff00"/><rect x="405" y="433" width="1" height="2" fill="#48f000"/><rect x="406" y="424" width="1" height="11" fill="#f0ff00"/><rect x="406" y="433" width="1" height="2" fill="#48f000"/><rect x="407" y="424" width="1" height="11" fill="#f0ff00"/><rect x="407" y="432" width="1" height="3" fill="#48f000"/><rect x="408" y="423" width="1" height="12" fill="#f0ff00"/><rect x="408" y="433" width="1" height="2" fill="#48f000"/><rect x="409" y="423" width="1" height="12" fill="#f0ff00"/><rect x="409" y="432" width="1" height="3" fill="#48f000"/><rect x="409" y="425" width="1" height="-2" fill="#ffff00"/><rect x="410" y="424" width="1" height="11" fill="#f0ff00"/><rect x="410" y="432" width="1" height="3" fill="#48f000"/><rect x="411" y="428" width="1" height="7" fill="#a0ff10"/><rect x="411" y="433" width="1" height="2" fill="#48f000"/><rect x="412" y="428" width="1" height="7" fill="#a0ff10"/><rect x="412" y="432" width="1" height="3" fill="#48f000"/><rect x="413" y="429" width="1" height="6" fill="#a0ff10"/><rect x="413" y="432" width="1" height="3" fill="#48f000"/><rect x="414" y="428" width="1" height="7" fill="#a0ff10"/><rect x="414" y="432" width="1" height="3" fill="#48f000"/><rect x="415" y="428" width="1" height="7" fill="#a0ff10"/><rect x="415" y="432" width="1" height="3" fill="#48f000"/><rect x="416" y="428" width="1" height="7" fill="#a0ff10"/><rect x="416" y="432" width="1" height="3" fill="#48f000"/><rect x="417" y="428" width="1" height="7" fill="#a0ff10"/><rect x="417" y="432" width="1" height="3" fill="#48f000"/><rect x="417" y="426" width="1" height="2" fill="#ffff00"/><rect x="418" y="429" width="1" height="6" fill="#a0ff10"/><rect x="418" y="433" width="1" height="2" fill="#48f000"/><rect x="419" y="426" width="1" height="9" fill="#b8ff00"/><rect x="419" y="432" width="1" height="3" fill="#48f000"/><rect x="419" y="425" width="1" height="1" fill="#ffff00"/><rect x="420" y="426" width="1" height="9" fill="#b8ff00"/><rect x="420" y="433" width="1" height="2" fill="#48f000"/><rect x="421" y="431" width="1" height="4" fill="#a0ff10"/><rect x="421" y="433" width="1" height="2" fill="#48f000"/><rect x="422" y="428" width="1" height="7" fill="#a0ff10"/><rect x="422" y="432" width="1" height="3" fill="#48f000"/><rect x="423" y="428" width="1" height="7" fill="#a0ff10"/><rect x="423" y="432" width="1" height="3" fill="#48f000"/><rect x="424" y="428" width="1" height="7" fill="#a0ff10"/><rect x="424" y="432" width="1" height="3" fill="#48f000"/><rect x="425" y="428" width="1" height="7" fill="#a0ff10"/><rect x="425" y="433" width="1" height="2" fill="#48f000"/><rect x="426" y="429" width="1" height="6" fill="#a0ff10"/><rect x="426" y="433" width="1" height="2" fill="#48f000"/><rect x="427" y="428" width="1" height="7" fill="#a0ff10"/><rect x="427" y="433" width="1" height="2" fill="#48f000"/><rect x="428" y="429" width="1" height="6" fill="#a0ff10"/><rect x="428" y="432" width="1" height="3" fill="#48f000"/><rect x="429" y="429" width="1" height="6" fill="#a0ff10"/><rect x="429" y="432" width="1" height="3" fill="#48f000"/><rect x="381" y="397" width="1" height="31" fill="#ff1050"/><rect x="418" y="379" width="1" height="49" fill="#ff1070"/><rect x="418" y="403" width="1" height="8" fill="#ff2828"/><rect x="418" y="411" width="1" height="17" fill="#ff5010"/><rect x="430" y="434" width="36" height="1" fill="#0000ff"/></svg>
<!-- chart labels -->
<div class="t r" style="left:0;top:132px;width:42px">1000</div>
<div class="t r" style="left:0;top:158px;width:42px">800</div>
<div class="t r" style="left:0;top:185px;width:42px">600</div>
<div class="t r" style="left:0;top:211px;width:42px">400</div>
<div class="t r" style="left:0;top:238px;width:42px">200</div>
<div class="t" style="left:471px;top:132px">16</div>
<div class="t" style="left:471px;top:148px">14</div>
<div class="t" style="left:471px;top:165px">12</div>
<div class="t" style="left:471px;top:182px">10</div>
<div class="t" style="left:471px;top:198px">8</div>
<div class="t" style="left:471px;top:215px">6</div>
<div class="t" style="left:471px;top:232px">4</div>
<div class="t" style="left:471px;top:248px">2</div>
<div class="t r" style="left:0;top:294px;width:42px">50</div>
<div class="t r" style="left:0;top:321px;width:42px">40</div>
<div class="t r" style="left:0;top:347px;width:42px">30</div>
<div class="t r" style="left:0;top:374px;width:42px">20</div>
<div class="t r" style="left:0;top:400px;width:42px">10</div>
<div class="t c" style="left:30px;top:276px;width:40px">0.0</div><div class="t c" style="left:30px;top:437px;width:40px">0.0</div><div class="t c" style="left:76px;top:276px;width:40px">0.5</div><div class="t c" style="left:76px;top:437px;width:40px">0.5</div><div class="t c" style="left:123px;top:276px;width:40px">1.0</div><div class="t c" style="left:123px;top:437px;width:40px">1.0</div><div class="t c" style="left:169px;top:276px;width:40px">1.5</div><div class="t c" style="left:169px;top:437px;width:40px">1.5</div><div class="t c" style="left:216px;top:276px;width:40px">2.0</div><div class="t c" style="left:216px;top:437px;width:40px">2.0</div><div class="t c" style="left:262px;top:276px;width:40px">2.5</div><div class="t c" style="left:262px;top:437px;width:40px">2.5</div><div class="t c" style="left:308px;top:276px;width:40px">3.0</div><div class="t c" style="left:308px;top:437px;width:40px">3.0</div><div class="t c" style="left:355px;top:276px;width:40px">3.5</div><div class="t c" style="left:355px;top:437px;width:40px">3.5</div><div class="t c" style="left:401px;top:276px;width:40px">4.0</div><div class="t c" style="left:401px;top:437px;width:40px">4.0</div><div class="t c" style="left:448px;top:276px;width:40px">4.5</div><div class="t c" style="left:448px;top:437px;width:40px">4.5</div>
<!-- right panel -->
<div class="fg" style="left:491px;top:132px;width:140px;height:84px"></div>
<div class="t m" style="left:497px;top:127px;padding:0 3px 0 2px;background:#e3e3e3;color:#303050">Disk-Info</div>
<div class="t" style="left:499px;top:141px">Typ:</div><div class="t nv" style="left:545px;top:141px">DVD-RW</div>
<div class="t" style="left:499px;top:159px">ID:</div><svg class="abs" style="left:548px;top:158px" width="8" height="12"><path d="M4 1.5 V10.5 M2.2 3.3 L4 1.5 L5.8 3.3 M2.2 8.7 L4 10.5 L5.8 8.7" stroke="#00007f" stroke-width="1.2" fill="none"/></svg>
<div class="t" style="left:499px;top:177px">Datum:</div><div class="t nv" style="left:544px;top:177px">n/a</div>
<div class="t" style="left:499px;top:194px">Label:</div><div class="t nv" style="left:544px;top:194px">n/a</div>

<div class="fg" style="left:491px;top:223px;width:140px;height:205px"></div>
<div class="t m" style="left:497px;top:218px;padding:0 3px 0 2px;background:#e3e3e3;color:#303050;letter-spacing:-0.1px">Einstellungen</div>
<div class="abs" style="left:500px;top:234px;width:84px;height:20px;border:1px solid #8c8c8c;background:#f4f4f4"></div>
<div class="abs" style="left:566px;top:235px;width:17px;height:18px;background:linear-gradient(#f8f8f8,#d8d8d8);border-left:1px solid #b8b8b8"></div>
<div class="abs" style="left:569px;top:239px;width:11px;height:8px;background:#0a2060;padding:2px 3px"><div style="width:5px;height:4px;background:#60c0f8"></div></div>
<div class="t" style="left:505px;top:238px">4 X</div>
<div class="abs" style="left:592px;top:232px;width:23px;height:23px;background:#ececec;border:1px solid #fff;border-right-color:#8a8a8a;border-bottom-color:#8a8a8a;box-shadow:inset -1px -1px 0 #c0c0c0"></div>
<svg class="abs" style="left:592px;top:232px" width="23" height="23"><rect x="4.5" y="3.5" width="13" height="16" fill="#fff" stroke="#000" stroke-width="1.3"/>
<path d="M7.5 12 V9.5 Q7.5 7.5 10 7.5 H12" stroke="#109010" stroke-width="1.6" fill="none"/><path d="M11.5 5 L14.5 7.5 L11.5 10 Z" fill="#109010"/>
<path d="M14.5 11 V13.5 Q14.5 15.5 12 15.5 H10" stroke="#109010" stroke-width="1.6" fill="none"/><path d="M10.5 13 L7.5 15.5 L10.5 18 Z" fill="#109010"/></svg>
<div class="t" style="left:501px;top:265px">Start:</div>
<div class="abs" style="left:554px;top:259px;width:60px;height:20px;border:1px solid #a0a0a0;background:#ececec;box-shadow:inset 1px 1px 0 #fff"></div>
<div class="t" style="left:557px;top:263px">0000 MB</div>
<div class="t" style="left:501px;top:288px">Ende:</div>
<div class="abs" style="left:554px;top:282px;width:60px;height:20px;border:1px solid #a0a0a0;background:#ececec;box-shadow:inset 1px 1px 0 #fff"></div>
<div class="t" style="left:557px;top:286px">4210 MB</div>
<div class="cb" style="left:502px;top:305px"></div><div class="t" style="left:517px;top:305px;letter-spacing:-0.35px">Schnelles Scannen</div>
<div class="cb" style="left:502px;top:322px"></div><div class="t" style="left:517px;top:323px">C1/PIE anzeigen</div>
<div class="cb" style="left:502px;top:337px"></div><div class="t" style="left:517px;top:338px">C2/PIF anzeigen</div>
<div class="cb" style="left:502px;top:353px"></div><div class="t" style="left:517px;top:354px">Jitter anzeiger</div>
<div class="cb" style="left:502px;top:369px"></div><div class="t" style="left:517px;top:369px">Zeige Lesegeschw.</div>
<div class="cb" style="left:502px;top:384px;border-color:#c8c8c8;box-shadow:inset 0 0 0 1px #a8a8a8;background:linear-gradient(#f4f4f4,#e0e0e0)"></div><div class="t" style="left:517px;top:385px;color:#a8a898">Zeige Schreibgeschw.</div>
<svg class="abs" style="left:502px;top:305px" width="14" height="95">
 <path d="M2.6 22.8 L5 25.8 L9.8 21" stroke="#000" stroke-width="2.2" fill="none"/>
 <path d="M2.6 37.8 L5 40.8 L9.8 36" stroke="#000" stroke-width="2.2" fill="none"/>
 <path d="M2.6 69.8 L5 72.8 L9.8 68" stroke="#000" stroke-width="2.2" fill="none"/>
 <path d="M2.6 84.8 L5 87.8 L9.8 83" stroke="#a0a0a0" stroke-width="2" fill="none"/>
</svg>
<div class="btn" style="left:527px;top:401px;width:97px;height:22px;border-color:#303030;box-shadow:inset 0 0 0 1px #6894e0,inset -2px -2px 0 #8cb0f0"></div>
<div class="t c m" style="left:526px;top:406px;width:97px">Erweitert</div>

<div class="abs" style="left:491px;top:433px;width:141px;height:27px;border:1px solid #8c8c8c;border-right-color:#f4f4f4;border-bottom-color:#d8d8d8;box-shadow:inset 1px 1px 0 #fff;background:#e8e8e8"></div>
<div class="t" style="left:502px;top:441px;letter-spacing:-0.35px">Qualitätsindex:</div>
<div class="t r nv" style="left:560px;top:441px;width:61px">23</div>
<div class="abs" style="left:491px;top:465px;width:141px;height:57px;border:1px solid #8c8c8c;border-right-color:#f4f4f4;border-bottom-color:#fafafa;box-shadow:inset 1px 1px 0 #fff;background:#e8e8e8"></div>
<div class="t" style="left:502px;top:474px;letter-spacing:-0.35px">Fortschritt:</div>
<div class="t r nv" style="left:560px;top:474px;width:61px">100 %</div>
<div class="t" style="left:502px;top:490px;letter-spacing:-0.35px">Position:</div>
<div class="t r nv" style="left:560px;top:490px;width:61px">4209 MB</div>
<div class="t" style="left:502px;top:506px">Geschwindigkeit:</div>
<div class="t r nv" style="left:560px;top:506px;width:61px">4.01 X</div>

<!-- bottom groups -->
<div class="grp" style="left:14px;top:465px;width:146px;height:56px;background:#e8e8e8"></div>
<div class="abs" style="left:22px;top:459px;width:54px;height:8px;background:#e3e3e3"></div>
<div class="abs" style="left:24px;top:462px;width:8px;height:8px;background:#00f0f0;border:1px solid #000"></div>
<div class="t" style="left:35px;top:460px;letter-spacing:-0.4px">PI Errors</div>
<div class="t" style="left:22px;top:476px">Durchschnitt</div><div class="t r nv" style="left:80px;top:476px;width:71px">466.54</div>
<div class="t" style="left:22px;top:490px;letter-spacing:-0.5px">Maximum:</div><div class="t r nv" style="left:80px;top:490px;width:71px">738</div>
<div class="t" style="left:22px;top:505px;letter-spacing:-0.5px">Gesamt:</div><div class="t r nv" style="left:80px;top:505px;width:71px">7854640</div>

<div class="grp" style="left:173px;top:465px;width:145px;height:56px;background:#e8e8e8"></div>
<div class="abs" style="left:180px;top:459px;width:64px;height:8px;background:#e3e3e3"></div>
<div class="abs" style="left:183px;top:462px;width:8px;height:8px;background:#f0f000;border:1px solid #000"></div>
<div class="t" style="left:193px;top:460px;letter-spacing:-0.3px">PI Failures</div>
<div class="t" style="left:181px;top:476px">Durchschnitt</div><div class="t r nv" style="left:240px;top:476px;width:69px">0.20</div>
<div class="t" style="left:181px;top:490px;letter-spacing:-0.5px">Maximum:</div><div class="t r nv" style="left:240px;top:490px;width:69px">21</div>
<div class="t" style="left:181px;top:505px;letter-spacing:-0.5px">Gesamt:</div><div class="t r nv" style="left:240px;top:505px;width:69px">27277</div>

<div class="grp" style="left:331px;top:465px;width:147px;height:43px;background:#e8e8e8"></div>
<div class="abs" style="left:339px;top:459px;width:37px;height:8px;background:#e3e3e3"></div>
<div class="abs" style="left:341px;top:462px;width:8px;height:8px;background:#f000f0;border:1px solid #000"></div>
<div class="t" style="left:351px;top:460px">Jitter</div>
<div class="t" style="left:339px;top:476px">Durchschnitt</div><div class="t r nv" style="left:420px;top:476px;width:50px">-</div>
<div class="t" style="left:339px;top:491px;letter-spacing:-0.5px">Maximum:</div><div class="t r nv" style="left:420px;top:491px;width:50px">-</div>
<div class="t" style="left:339px;top:509px">PO Ausfälle:</div><div class="t r nv" style="left:420px;top:509px;width:50px">-</div>
</body></html>
